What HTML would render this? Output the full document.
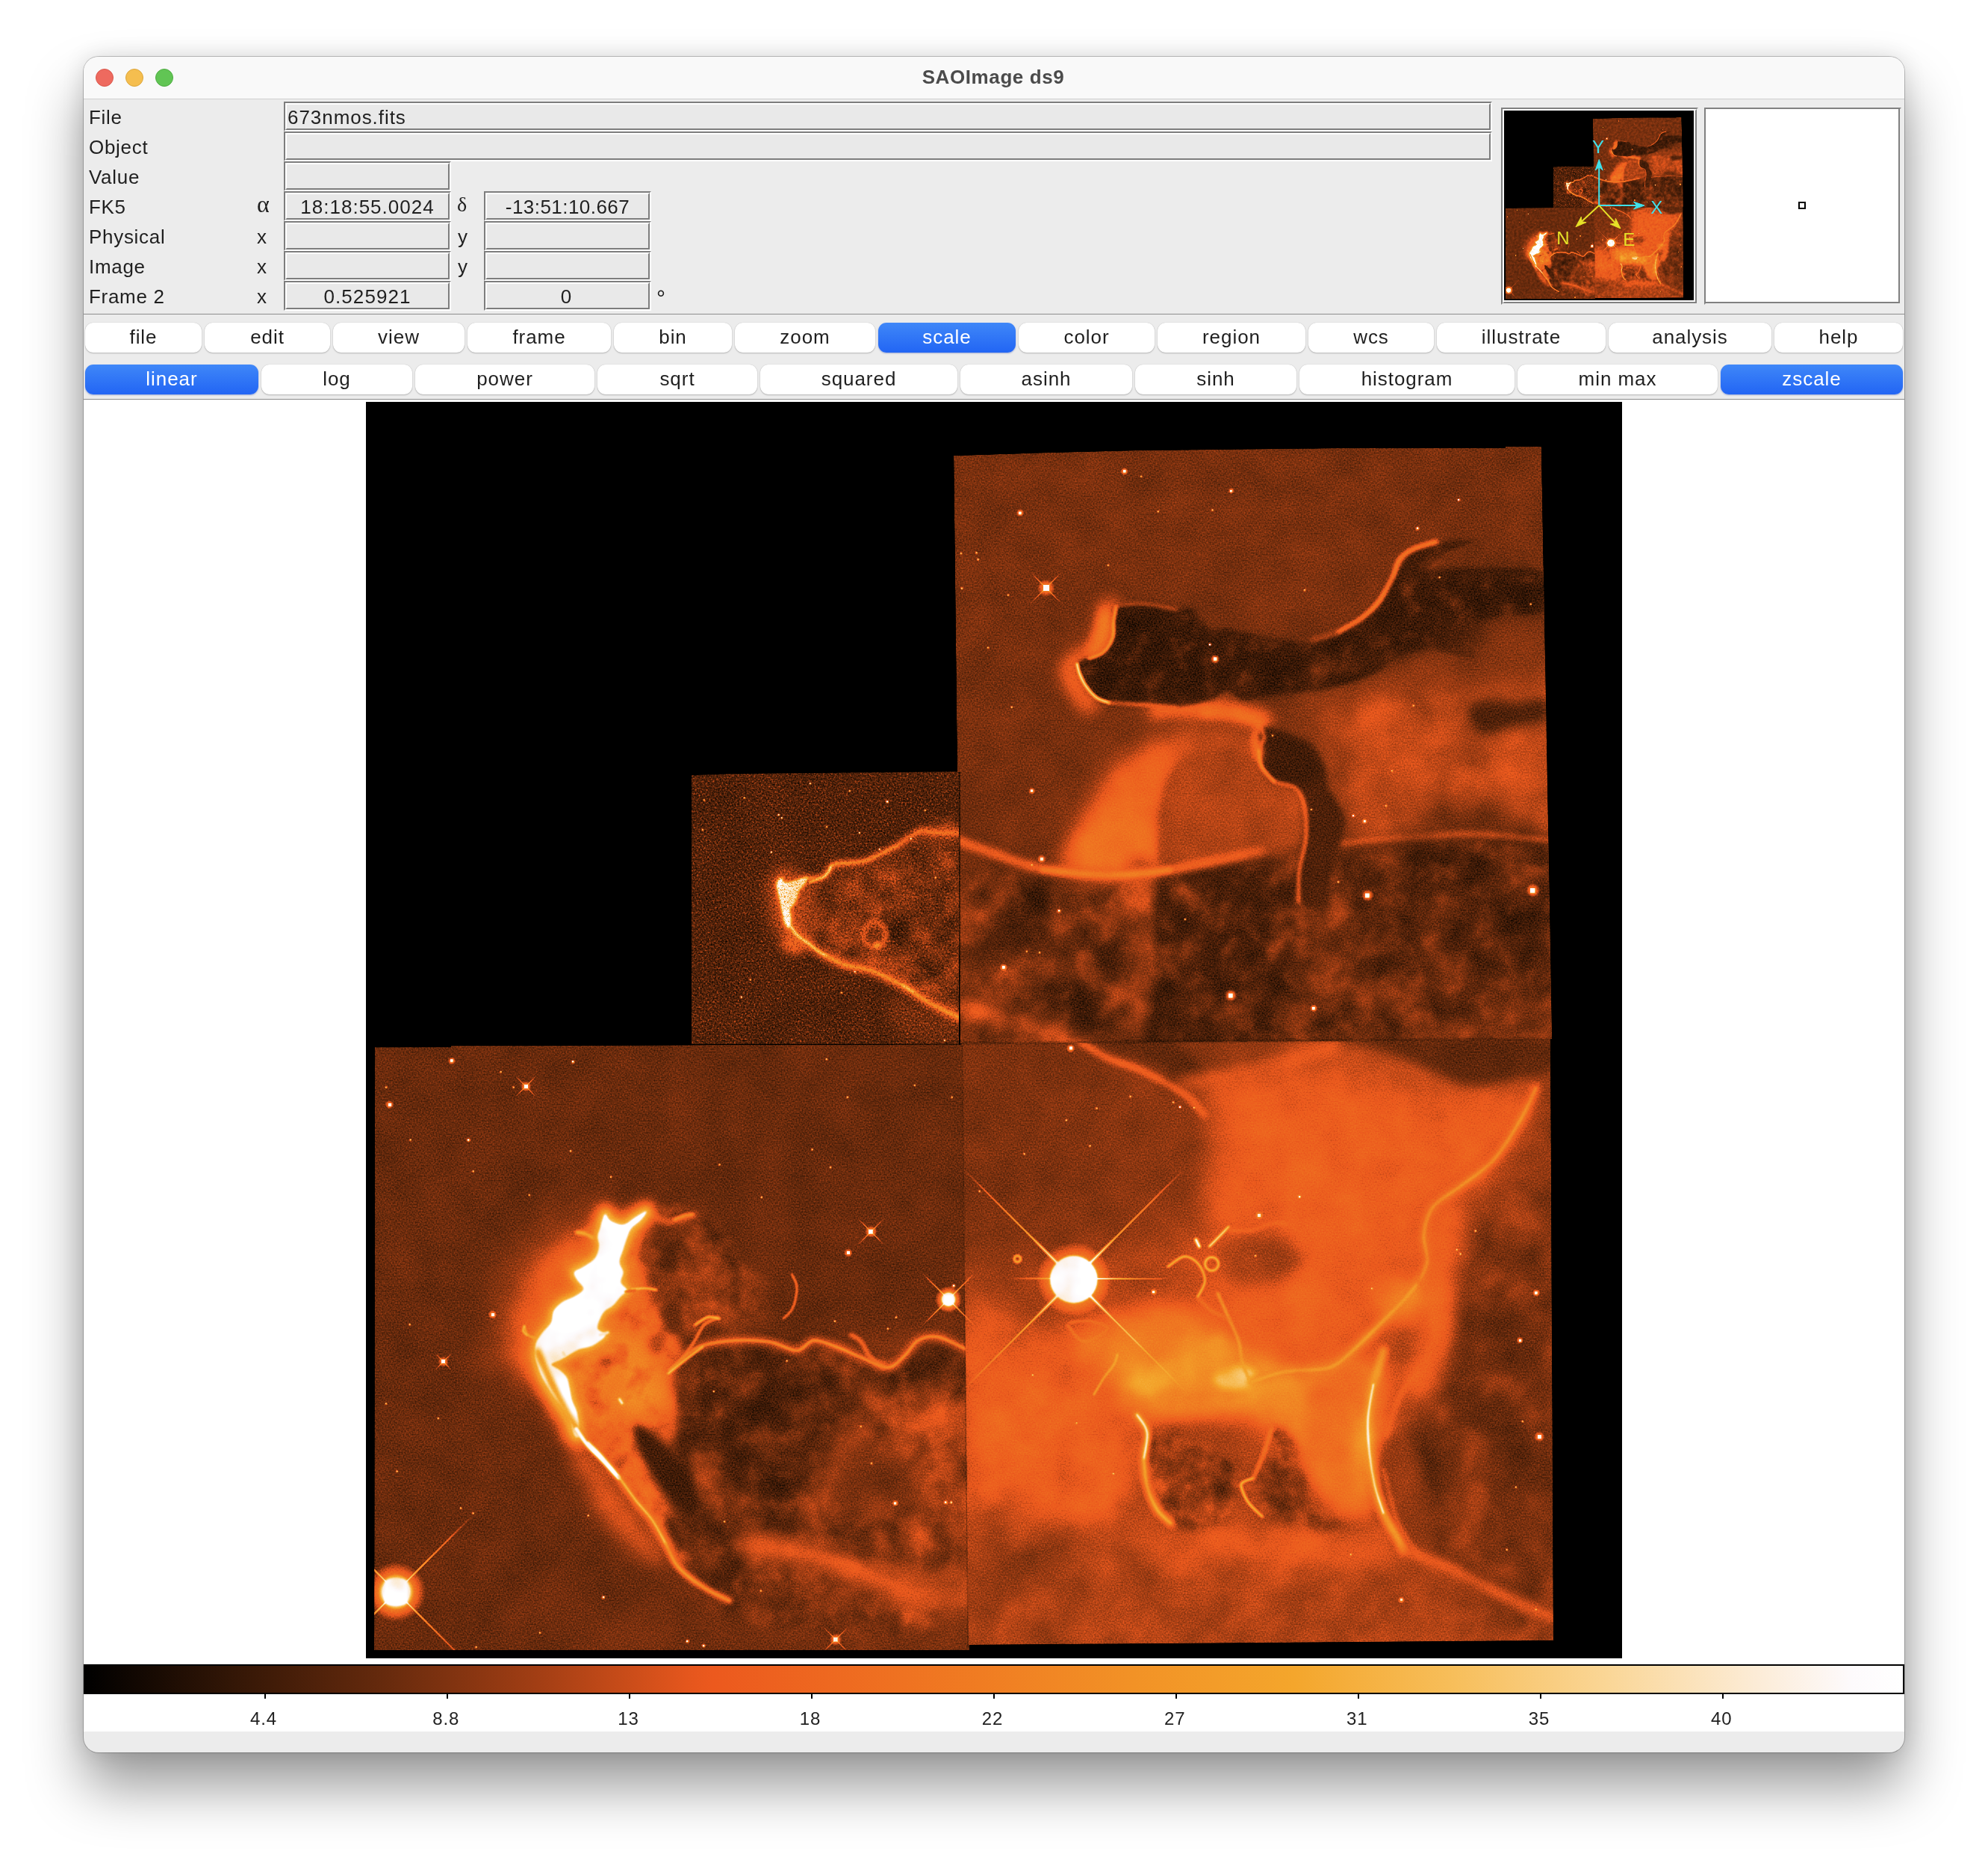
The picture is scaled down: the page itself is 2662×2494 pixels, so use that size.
<!DOCTYPE html>
<html><head><meta charset="utf-8"><title>SAOImage ds9</title>
<style>
html,body{margin:0;padding:0;background:#fff;}
body{width:2662px;height:2494px;position:relative;overflow:hidden;font-family:"Liberation Sans",sans-serif;}
#win{position:absolute;left:112px;top:76px;width:2438px;height:2270px;border-radius:20px;background:#ececec;
 box-shadow:0 0 0 1px rgba(0,0,0,.22),0 46px 76px rgba(0,0,0,.40),0 0 30px rgba(0,0,0,.12);}
#clip{position:absolute;left:0;top:0;width:2438px;height:2270px;border-radius:20px;overflow:hidden;will-change:transform;-webkit-font-smoothing:antialiased;}
#tb{position:absolute;left:0;top:0;width:2438px;height:56px;background:#f9f9f9;border-bottom:1px solid #cfcfcf;}
#tb .t{position:absolute;left:0;width:2438px;top:12px;text-align:center;font-weight:bold;font-size:26px;line-height:30px;color:#4b4b4b;letter-spacing:.6px;margin-left:-1px;}
.dot{position:absolute;top:16px;width:24px;height:24px;border-radius:50%;box-sizing:border-box;}
.lab{position:absolute;left:7px;font-size:26px;line-height:36px;color:#1f1f1f;letter-spacing:.7px;white-space:nowrap;}
.sym{position:absolute;font-size:26px;line-height:36px;color:#1f1f1f;white-space:nowrap;}
.ent{position:absolute;height:40px;background:#e9e9e9;box-sizing:border-box;border-top:2px solid #7d7d7d;border-left:2px solid #7d7d7d;border-right:2px solid #fff;border-bottom:2px solid #fff;}
.ent i{position:absolute;left:0;top:0;right:0;bottom:0;border-top:2px solid #fff;border-left:2px solid #fff;border-right:2px solid #7d7d7d;border-bottom:2px solid #7d7d7d;}
.ent span{position:absolute;left:3px;right:3px;top:1px;font-size:26px;line-height:36px;color:#1f1f1f;letter-spacing:.75px;white-space:nowrap;}
.ent span.ctr{text-align:center;}
.hr{position:absolute;left:0;width:2438px;height:1px;background:#8c8c8c;}
.btn{position:absolute;height:40px;border-radius:11px;background:#fff;box-shadow:0 1px 2px rgba(0,0,0,.22),0 0 1px rgba(0,0,0,.25);
 font-size:26px;line-height:38px;text-align:center;color:#1f1f1f;letter-spacing:.95px;}
.btn.on{background:linear-gradient(#3f87f8,#2265f4);color:#fff;box-shadow:0 1px 2px rgba(0,40,160,.35);}
#view{position:absolute;left:0;top:459px;width:2438px;height:1783px;background:#fff;}
#cbar{position:absolute;left:0;top:2152px;width:2438px;height:40px;box-sizing:border-box;border:2px solid #000;}
.tick{position:absolute;top:2192px;width:2px;height:6px;background:#000;}
.tl{position:absolute;top:2211px;width:124px;text-align:center;font-size:24px;line-height:28px;color:#222;letter-spacing:.9px;}
.frame{position:absolute;width:264px;height:264px;box-sizing:border-box;}
</style></head><body>
<div id="win"><div id="clip">
<div id="tb"><div class="dot" style="left:16px;background:#ee6a5f;border:1px solid #d9574c"></div><div class="dot" style="left:56px;background:#f5be4f;border:1px solid #dba53a"></div><div class="dot" style="left:96px;background:#61c554;border:1px solid #4eab42"></div><div class="t">SAOImage ds9</div></div>
<div class="lab" style="top:63px">File</div>
<div class="lab" style="top:103px">Object</div>
<div class="lab" style="top:143px">Value</div>
<div class="lab" style="top:183px">FK5</div>
<div class="lab" style="top:223px">Physical</div>
<div class="lab" style="top:263px">Image</div>
<div class="lab" style="top:303px">Frame 2</div>
<div class="sym" style="left:232px;top:179px;font-family:'Liberation Serif',serif;font-size:32px">&alpha;</div>
<div class="sym" style="left:500px;top:180px;font-family:'Liberation Serif',serif;font-size:28px">&delta;</div>
<div class="sym" style="left:232px;top:223px">x</div><div class="sym" style="left:501px;top:223px">y</div>
<div class="sym" style="left:232px;top:263px">x</div><div class="sym" style="left:501px;top:263px">y</div>
<div class="sym" style="left:232px;top:303px">x</div><div class="sym" style="left:767px;top:304.5px;font-size:30px">&deg;</div>
<div class="ent" style="left:268px;top:60px;width:1618px"><i></i><b></b><span class="left" style="letter-spacing:0.95px">673nmos.fits</span></div><div class="ent" style="left:268px;top:100px;width:1618px"><i></i><b></b><span class="left" style="letter-spacing:0.75px"></span></div><div class="ent" style="left:268px;top:140px;width:224px"><i></i><b></b><span class="left" style="letter-spacing:0.75px"></span></div><div class="ent" style="left:268px;top:180px;width:224px"><i></i><b></b><span class="ctr" style="letter-spacing:1.00px">18:18:55.0024</span></div><div class="ent" style="left:536px;top:180px;width:224px"><i></i><b></b><span class="ctr" style="letter-spacing:0.45px">-13:51:10.667</span></div><div class="ent" style="left:268px;top:220px;width:224px"><i></i><b></b><span class="left" style="letter-spacing:0.75px"></span></div><div class="ent" style="left:536px;top:220px;width:224px"><i></i><b></b><span class="left" style="letter-spacing:0.75px"></span></div><div class="ent" style="left:268px;top:260px;width:224px"><i></i><b></b><span class="left" style="letter-spacing:0.75px"></span></div><div class="ent" style="left:536px;top:260px;width:224px"><i></i><b></b><span class="left" style="letter-spacing:0.75px"></span></div><div class="ent" style="left:268px;top:300px;width:224px"><i></i><b></b><span class="ctr" style="letter-spacing:1.10px">0.525921</span></div><div class="ent" style="left:536px;top:300px;width:224px"><i></i><b></b><span class="ctr" style="margin-left:-4px;letter-spacing:0.00px">0</span></div>
<div class="hr" style="top:344px"></div>
<div class="btn" style="left:2px;top:356px;width:156px">file</div>
<div class="btn" style="left:162px;top:356px;width:168px">edit</div>
<div class="btn" style="left:334px;top:356px;width:176px">view</div>
<div class="btn" style="left:514px;top:356px;width:192px">frame</div>
<div class="btn" style="left:710px;top:356px;width:158px">bin</div>
<div class="btn" style="left:872px;top:356px;width:188px">zoom</div>
<div class="btn on" style="left:1064px;top:356px;width:184px">scale</div>
<div class="btn" style="left:1252px;top:356px;width:182px">color</div>
<div class="btn" style="left:1438px;top:356px;width:198px">region</div>
<div class="btn" style="left:1640px;top:356px;width:168px">wcs</div>
<div class="btn" style="left:1812px;top:356px;width:226px">illustrate</div>
<div class="btn" style="left:2042px;top:356px;width:218px">analysis</div>
<div class="btn" style="left:2264px;top:356px;width:172px">help</div>
<div class="btn on" style="left:2px;top:412px;width:232px">linear</div>
<div class="btn" style="left:238px;top:412px;width:202px">log</div>
<div class="btn" style="left:444px;top:412px;width:240px">power</div>
<div class="btn" style="left:688px;top:412px;width:214px">sqrt</div>
<div class="btn" style="left:906px;top:412px;width:264px">squared</div>
<div class="btn" style="left:1174px;top:412px;width:230px">asinh</div>
<div class="btn" style="left:1408px;top:412px;width:216px">sinh</div>
<div class="btn" style="left:1628px;top:412px;width:288px">histogram</div>
<div class="btn" style="left:1920px;top:412px;width:268px">min max</div>
<div class="btn on" style="left:2192px;top:412px;width:244px">zscale</div>
<div class="hr" style="top:458px"></div>
<div id="view"></div>
<!-- panner -->
<div class="frame" style="left:1898px;top:68px;border-top:2px solid #808080;border-left:2px solid #808080;border-right:2px solid #ececec;border-bottom:2px solid #ececec;">
 <div style="position:absolute;left:0;top:0;width:260px;height:260px;box-sizing:border-box;border-top:2px solid #fff;border-left:2px solid #fff;border-right:2px solid #808080;border-bottom:2px solid #808080;background:#fff"></div>
 <div style="position:absolute;left:2px;top:2px;width:254px;height:254px;background:#000"></div>
</div>
<!-- magnifier -->
<div class="frame" style="left:2170px;top:68px;border-top:2px solid #808080;border-left:2px solid #808080;border-right:2px solid #ececec;border-bottom:2px solid #ececec;">
 <div style="position:absolute;left:0;top:0;width:260px;height:260px;box-sizing:border-box;border-right:2px solid #808080;border-bottom:2px solid #808080;background:#fff"></div>
 <div style="position:absolute;left:124px;top:124px;width:10px;height:10px;box-sizing:border-box;border:2px solid #000"></div>
</div>
<svg id="main" style="position:absolute;left:378px;top:462px" width="1682" height="1682" viewBox="490 538 1682 1682">
<defs>
<filter id="cm" x="490" y="538" width="1682" height="1682" filterUnits="userSpaceOnUse" color-interpolation-filters="sRGB">
 <feTurbulence type="fractalNoise" baseFrequency="0.5" numOctaves="2" seed="7" result="n"/>
 <feColorMatrix in="n" type="matrix" values="1 0 0 0 0  1 0 0 0 0  1 0 0 0 0  0 0 0 0 1" result="ng"/>
 <feTurbulence type="fractalNoise" baseFrequency="0.018" numOctaves="3" seed="11" result="m"/>
 <feColorMatrix in="m" type="matrix" values="0 1 0 0 0  0 1 0 0 0  0 1 0 0 0  0 0 0 0 1" result="mg"/>
 <feComposite in="SourceGraphic" in2="mg" operator="arithmetic" k1="0.30" k2="0.85" k3="0" k4="0" result="s0"/>
 <feComposite in="s0" in2="ng" operator="arithmetic" k1="-0.26" k2="1.13" k3="0.26" k4="-0.13" result="s"/>
 <feComponentTransfer in="s" result="c">
  <feFuncR type="table" tableValues="0.0000 0.0408 0.0817 0.1225 0.1634 0.2042 0.2446 0.2851 0.3256 0.3660 0.4074 0.4535 0.4997 0.5458 0.5919 0.6385 0.6911 0.7437 0.7963 0.8489 0.8993 0.9261 0.9282 0.9303 0.9323 0.9341 0.9357 0.9373 0.9388 0.9404 0.9419 0.9435 0.9450 0.9465 0.9481 0.9496 0.9511 0.9526 0.9540 0.9555 0.9571 0.9593 0.9616 0.9638 0.9661 0.9684 0.9707 0.9730 0.9753 0.9776 0.9799 0.9816 0.9832 0.9848 0.9863 0.9879 0.9892 0.9905 0.9918 0.9953 1.0000"/>
  <feFuncG type="table" tableValues="0.0000 0.0180 0.0359 0.0539 0.0719 0.0894 0.1049 0.1205 0.1361 0.1516 0.1672 0.1825 0.1979 0.2133 0.2287 0.2443 0.2634 0.2825 0.3017 0.3208 0.3392 0.3537 0.3692 0.3848 0.4004 0.4159 0.4315 0.4471 0.4626 0.4782 0.4944 0.5113 0.5282 0.5451 0.5621 0.5782 0.5930 0.6079 0.6228 0.6376 0.6528 0.6708 0.6888 0.7069 0.7249 0.7429 0.7613 0.7798 0.7982 0.8167 0.8352 0.8527 0.8701 0.8874 0.9047 0.9220 0.9396 0.9572 0.9748 0.9883 1.0000"/>
  <feFuncB type="table" tableValues="0.0000 0.0049 0.0098 0.0147 0.0196 0.0246 0.0301 0.0355 0.0410 0.0464 0.0518 0.0572 0.0626 0.0680 0.0734 0.0789 0.0860 0.0932 0.1004 0.1076 0.1144 0.1183 0.1203 0.1224 0.1245 0.1263 0.1279 0.1294 0.1310 0.1325 0.1348 0.1379 0.1410 0.1440 0.1471 0.1507 0.1552 0.1596 0.1641 0.1685 0.1760 0.2106 0.2451 0.2797 0.3142 0.3488 0.3935 0.4397 0.4858 0.5319 0.5781 0.6282 0.6793 0.7305 0.7817 0.8329 0.8803 0.9268 0.9734 0.9930 1.0000"/>
 </feComponentTransfer>
 <feComposite in="c" in2="SourceAlpha" operator="in"/>
</filter>
<filter id="b0_7" x="430" y="478" width="1802" height="1802" filterUnits="userSpaceOnUse" color-interpolation-filters="sRGB"><feGaussianBlur stdDeviation="0.7"/></filter>
<filter id="b0_8" x="430" y="478" width="1802" height="1802" filterUnits="userSpaceOnUse" color-interpolation-filters="sRGB"><feGaussianBlur stdDeviation="0.8"/></filter>
<filter id="b1_0" x="430" y="478" width="1802" height="1802" filterUnits="userSpaceOnUse" color-interpolation-filters="sRGB"><feGaussianBlur stdDeviation="1.0"/></filter>
<filter id="b1_2" x="430" y="478" width="1802" height="1802" filterUnits="userSpaceOnUse" color-interpolation-filters="sRGB"><feGaussianBlur stdDeviation="1.2"/></filter>
<filter id="b1_3" x="430" y="478" width="1802" height="1802" filterUnits="userSpaceOnUse" color-interpolation-filters="sRGB"><feGaussianBlur stdDeviation="1.3"/></filter>
<filter id="b1_5" x="430" y="478" width="1802" height="1802" filterUnits="userSpaceOnUse" color-interpolation-filters="sRGB"><feGaussianBlur stdDeviation="1.5"/></filter>
<filter id="b1_6" x="430" y="478" width="1802" height="1802" filterUnits="userSpaceOnUse" color-interpolation-filters="sRGB"><feGaussianBlur stdDeviation="1.6"/></filter>
<filter id="b1_8" x="430" y="478" width="1802" height="1802" filterUnits="userSpaceOnUse" color-interpolation-filters="sRGB"><feGaussianBlur stdDeviation="1.8"/></filter>
<filter id="b2" x="430" y="478" width="1802" height="1802" filterUnits="userSpaceOnUse" color-interpolation-filters="sRGB"><feGaussianBlur stdDeviation="2"/></filter>
<filter id="b2_5" x="430" y="478" width="1802" height="1802" filterUnits="userSpaceOnUse" color-interpolation-filters="sRGB"><feGaussianBlur stdDeviation="2.5"/></filter>
<filter id="b3" x="430" y="478" width="1802" height="1802" filterUnits="userSpaceOnUse" color-interpolation-filters="sRGB"><feGaussianBlur stdDeviation="3"/></filter>
<filter id="b3_5" x="430" y="478" width="1802" height="1802" filterUnits="userSpaceOnUse" color-interpolation-filters="sRGB"><feGaussianBlur stdDeviation="3.5"/></filter>
<filter id="b4" x="430" y="478" width="1802" height="1802" filterUnits="userSpaceOnUse" color-interpolation-filters="sRGB"><feGaussianBlur stdDeviation="4"/></filter>
<filter id="b5" x="430" y="478" width="1802" height="1802" filterUnits="userSpaceOnUse" color-interpolation-filters="sRGB"><feGaussianBlur stdDeviation="5"/></filter>
<filter id="b6" x="430" y="478" width="1802" height="1802" filterUnits="userSpaceOnUse" color-interpolation-filters="sRGB"><feGaussianBlur stdDeviation="6"/></filter>
<filter id="b7" x="430" y="478" width="1802" height="1802" filterUnits="userSpaceOnUse" color-interpolation-filters="sRGB"><feGaussianBlur stdDeviation="7"/></filter>
<filter id="b8" x="430" y="478" width="1802" height="1802" filterUnits="userSpaceOnUse" color-interpolation-filters="sRGB"><feGaussianBlur stdDeviation="8"/></filter>
<filter id="b9" x="430" y="478" width="1802" height="1802" filterUnits="userSpaceOnUse" color-interpolation-filters="sRGB"><feGaussianBlur stdDeviation="9"/></filter>
<filter id="b10" x="430" y="478" width="1802" height="1802" filterUnits="userSpaceOnUse" color-interpolation-filters="sRGB"><feGaussianBlur stdDeviation="10"/></filter>
<filter id="b12" x="430" y="478" width="1802" height="1802" filterUnits="userSpaceOnUse" color-interpolation-filters="sRGB"><feGaussianBlur stdDeviation="12"/></filter>
<filter id="b13" x="430" y="478" width="1802" height="1802" filterUnits="userSpaceOnUse" color-interpolation-filters="sRGB"><feGaussianBlur stdDeviation="13"/></filter>
<filter id="b14" x="430" y="478" width="1802" height="1802" filterUnits="userSpaceOnUse" color-interpolation-filters="sRGB"><feGaussianBlur stdDeviation="14"/></filter>
<filter id="b16" x="430" y="478" width="1802" height="1802" filterUnits="userSpaceOnUse" color-interpolation-filters="sRGB"><feGaussianBlur stdDeviation="16"/></filter>
<filter id="b18" x="430" y="478" width="1802" height="1802" filterUnits="userSpaceOnUse" color-interpolation-filters="sRGB"><feGaussianBlur stdDeviation="18"/></filter>
<filter id="b20" x="430" y="478" width="1802" height="1802" filterUnits="userSpaceOnUse" color-interpolation-filters="sRGB"><feGaussianBlur stdDeviation="20"/></filter>
<filter id="b22" x="430" y="478" width="1802" height="1802" filterUnits="userSpaceOnUse" color-interpolation-filters="sRGB"><feGaussianBlur stdDeviation="22"/></filter>
<filter id="b24" x="430" y="478" width="1802" height="1802" filterUnits="userSpaceOnUse" color-interpolation-filters="sRGB"><feGaussianBlur stdDeviation="24"/></filter>
<filter id="b25" x="430" y="478" width="1802" height="1802" filterUnits="userSpaceOnUse" color-interpolation-filters="sRGB"><feGaussianBlur stdDeviation="25"/></filter>
<filter id="b26" x="430" y="478" width="1802" height="1802" filterUnits="userSpaceOnUse" color-interpolation-filters="sRGB"><feGaussianBlur stdDeviation="26"/></filter>
<filter id="b30" x="430" y="478" width="1802" height="1802" filterUnits="userSpaceOnUse" color-interpolation-filters="sRGB"><feGaussianBlur stdDeviation="30"/></filter>
<filter id="b40" x="430" y="478" width="1802" height="1802" filterUnits="userSpaceOnUse" color-interpolation-filters="sRGB"><feGaussianBlur stdDeviation="40"/></filter><filter id="mot" x="430" y="478" width="1802" height="1802" filterUnits="userSpaceOnUse" color-interpolation-filters="sRGB">
<feGaussianBlur in="SourceAlpha" stdDeviation="10" result="sa"/>
<feTurbulence type="fractalNoise" baseFrequency="0.016" numOctaves="3" seed="4" result="t"/>
<feColorMatrix in="t" type="matrix" values="0 0 0 0 0  0 0 0 0 0  0 0 0 0 0  2.4 0 0 0 -1.15" result="dk"/>
<feComposite in="dk" in2="sa" operator="in" result="d"/>
<feColorMatrix in="t" type="matrix" values="0 0 0 0 0.5  0 0 0 0 0.5  0 0 0 0 0.5  -2.4 0 0 0 1.1" result="lt"/>
<feComposite in="lt" in2="sa" operator="in" result="l"/>
<feMerge><feMergeNode in="d"/><feMergeNode in="l"/></feMerge></filter>
<filter id="mot2" x="430" y="478" width="1802" height="1802" filterUnits="userSpaceOnUse" color-interpolation-filters="sRGB">
<feGaussianBlur in="SourceAlpha" stdDeviation="6" result="sa"/>
<feTurbulence type="fractalNoise" baseFrequency="0.032" numOctaves="3" seed="9" result="t"/>
<feColorMatrix in="t" type="matrix" values="0 0 0 0 0  0 0 0 0 0  0 0 0 0 0  2.4 0 0 0 -1.15" result="dk"/>
<feComposite in="dk" in2="sa" operator="in" result="d"/>
<feColorMatrix in="t" type="matrix" values="0 0 0 0 0.5  0 0 0 0 0.5  0 0 0 0 0.5  -2.4 0 0 0 1.1" result="lt"/>
<feComposite in="lt" in2="sa" operator="in" result="l"/>
<feMerge><feMergeNode in="d"/><feMergeNode in="l"/></feMerge></filter>
<filter id="mot3" x="430" y="478" width="1802" height="1802" filterUnits="userSpaceOnUse" color-interpolation-filters="sRGB">
<feGaussianBlur in="SourceAlpha" stdDeviation="16" result="sa"/>
<feTurbulence type="fractalNoise" baseFrequency="0.009" numOctaves="3" seed="2" result="t"/>
<feColorMatrix in="t" type="matrix" values="0 0 0 0 0  0 0 0 0 0  0 0 0 0 0  2.4 0 0 0 -1.15" result="dk"/>
<feComposite in="dk" in2="sa" operator="in" result="d"/>
<feColorMatrix in="t" type="matrix" values="0 0 0 0 0.5  0 0 0 0 0.5  0 0 0 0 0.5  -2.4 0 0 0 1.1" result="lt"/>
<feComposite in="lt" in2="sa" operator="in" result="l"/>
<feMerge><feMergeNode in="d"/><feMergeNode in="l"/></feMerge></filter>
<filter id="spk" x="430" y="478" width="1802" height="1802" filterUnits="userSpaceOnUse" color-interpolation-filters="sRGB">
<feGaussianBlur in="SourceAlpha" stdDeviation="1" result="sa"/>
<feTurbulence type="fractalNoise" baseFrequency="0.42" numOctaves="3" seed="21" result="t"/>
<feColorMatrix in="t" type="matrix" values="0 0 0 0 0  0 0 0 0 0  0 0 0 0 0  2.4 0 0 0 -1.15" result="dk"/>
<feComposite in="dk" in2="sa" operator="in" result="d"/>
<feColorMatrix in="t" type="matrix" values="0 0 0 0 0.5  0 0 0 0 0.5  0 0 0 0 0.5  -2.4 0 0 0 1.1" result="lt"/>
<feComposite in="lt" in2="sa" operator="in" result="l"/>
<feMerge><feMergeNode in="d"/><feMergeNode in="l"/></feMerge></filter>

<radialGradient id="bh"><stop offset="0" stop-color="#fff" stop-opacity="1"/><stop offset="0.45" stop-color="#fff" stop-opacity="0.9"/><stop offset="0.6" stop-color="#fff" stop-opacity="0.35"/><stop offset="1" stop-color="#fff" stop-opacity="0"/></radialGradient>
<linearGradient id="sp" gradientUnits="objectBoundingBox"><stop offset="0" stop-color="#fff" stop-opacity="0"/><stop offset="0.3" stop-color="#fff" stop-opacity="0.55"/><stop offset="0.5" stop-color="#fff" stop-opacity="1"/><stop offset="0.7" stop-color="#fff" stop-opacity="0.55"/><stop offset="1" stop-color="#fff" stop-opacity="0"/></linearGradient>
<radialGradient id="sh"><stop offset="0" stop-color="#fff" stop-opacity="0.95"/><stop offset="0.35" stop-color="#fff" stop-opacity="0.45"/><stop offset="1" stop-color="#fff" stop-opacity="0"/></radialGradient>
<clipPath id="chips"><polygon points="1277.0,610.0 1400.0,606.0 1520.0,603.0 1790.0,600.0 2016.0,600.0 2016.0,598.0 2064.0,598.0 2078.0,1391.0 1286.0,1397.0"/><polygon points="926.0,1038.0 980.0,1036.0 1284.0,1033.0 1284.0,1398.0 926.0,1398.0"/><polygon points="502.0,1402.0 604.0,1402.0 604.0,1400.0 1290.0,1398.0 1298.0,2209.0 501.0,2209.0"/><polygon points="1288.0,1397.0 2076.0,1391.0 2080.0,2196.0 1297.0,2202.0"/></clipPath>
<clipPath id="cTR"><polygon points="1277.0,610.0 1400.0,606.0 1520.0,603.0 1790.0,600.0 2016.0,600.0 2016.0,598.0 2064.0,598.0 2078.0,1391.0 1286.0,1397.0"/></clipPath><clipPath id="cPC"><polygon points="926.0,1038.0 980.0,1036.0 1284.0,1033.0 1284.0,1398.0 926.0,1398.0"/></clipPath><clipPath id="cBL"><polygon points="502.0,1402.0 604.0,1402.0 604.0,1400.0 1290.0,1398.0 1298.0,2209.0 501.0,2209.0"/></clipPath><clipPath id="cBR"><polygon points="1288.0,1397.0 2076.0,1391.0 2080.0,2196.0 1297.0,2202.0"/></clipPath>

</defs>
<rect x="490" y="538" width="1682" height="1682" fill="#000"/>
<g filter="url(#cm)"><g id="nebc">
<g clip-path="url(#chips)">
<g>
<path d="M1277.0 610.0 L1400.0 606.0 L1520.0 603.0 L1790.0 600.0 L2016.0 600.0 L2016.0 598.0 L2064.0 598.0 L2078.0 1391.0 L1286.0 1397.0Z" fill="rgb(48,48,48)"/>
<path d="M926.0 1038.0 L980.0 1036.0 L1284.0 1033.0 L1284.0 1398.0 L926.0 1398.0Z" fill="rgb(51,51,51)"/>
<path d="M502.0 1402.0 L604.0 1402.0 L604.0 1400.0 L1290.0 1398.0 L1298.0 2209.0 L501.0 2209.0Z" fill="rgb(43,43,43)"/>
<path d="M1288.0 1397.0 L2076.0 1391.0 L2080.0 2196.0 L1297.0 2202.0Z" fill="rgb(69,69,69)"/>
</g></g>
<g clip-path="url(#cBL)">
<g filter="url(#b30)">
<path d="M1076.2 1840.9C1125.0 1822.1 1264.0 1762.0 1301.6 1818.3C1339.2 1874.7 1354.2 2118.9 1301.6 2179.0C1249.0 2239.2 1046.1 2197.8 986.0 2179.0C925.9 2160.3 937.1 2107.7 940.9 2066.3C944.6 2025.0 986.0 1968.6 1008.5 1931.1C1031.1 1893.5 1027.3 1859.7 1076.2 1840.9Z" fill="rgb(56,56,56)"/>
<ellipse cx="1247.5" cy="1931.1" rx="85.7" ry="117.2" fill="rgb(74,74,74)"/>
<ellipse cx="895.8" cy="2179.0" rx="225.4" ry="36.1" fill="rgb(48,48,48)"/>
</g></g>
<g clip-path="url(#cBL)">
<g filter="url(#b26)">
<ellipse cx="756.0" cy="1741.7" rx="85.7" ry="135.3" fill="rgb(66,66,66)" transform="rotate(28.0 756.0 1741.7)"/>
</g></g>
<g clip-path="url(#cBL)">
<g filter="url(#b14)">
<ellipse cx="756.0" cy="1746.2" rx="54.1" ry="108.2" fill="rgb(97,97,97)" transform="rotate(28.0 756.0 1746.2)"/>
</g></g>
<g clip-path="url(#cBL)">
<g filter="url(#b12)">
<path d="M742.5 1840.9C750.0 1848.4 763.5 1896.5 778.6 1922.0C793.6 1947.6 813.1 1965.6 832.7 1994.2C852.2 2022.7 891.3 2078.4 895.8 2093.4C900.3 2108.4 874.8 2094.9 859.7 2084.4C844.7 2073.8 820.6 2051.3 805.6 2030.3C790.6 2009.2 781.6 1983.7 769.5 1958.1C757.5 1932.6 738.0 1896.5 733.5 1877.0C729.0 1857.4 735.0 1833.4 742.5 1840.9Z" fill="rgb(84,84,84)"/>
</g></g>
<g clip-path="url(#cBL)">
<g filter="url(#b14)">
<path d="M841.7 1624.5C849.2 1611.7 880.0 1629.0 895.8 1629.0C911.6 1629.0 927.4 1617.7 936.4 1624.5C945.4 1631.2 941.6 1656.0 949.9 1669.5C958.2 1683.1 974.0 1692.1 986.0 1705.6C998.0 1719.1 1022.0 1738.7 1022.0 1750.7C1022.0 1762.7 1002.5 1773.3 986.0 1777.8C969.4 1782.3 940.9 1782.3 922.9 1777.8C904.8 1773.3 889.8 1762.7 877.8 1750.7C865.7 1738.7 856.7 1726.7 850.7 1705.6C844.7 1684.6 834.2 1637.2 841.7 1624.5Z" fill="rgb(64,64,64)"/>
</g></g>
<g clip-path="url(#cBL)">
<g filter="url(#b10)">
<ellipse cx="895.8" cy="1678.6" rx="27.1" ry="40.6" fill="rgb(43,43,43)"/>
<ellipse cx="999.5" cy="1723.7" rx="27.1" ry="18.0" fill="rgb(59,59,59)"/>
</g></g>
<g clip-path="url(#cBL)">
<g filter="url(#b7)">
<path d="M805.6 1642.5C816.9 1635.7 841.7 1632.0 850.7 1642.5C859.7 1653.0 855.2 1687.6 859.7 1705.6C864.2 1723.7 869.5 1735.7 877.8 1750.7C886.0 1765.7 901.8 1780.8 909.3 1795.8C916.8 1810.8 922.1 1825.9 922.9 1840.9C923.6 1855.9 918.3 1870.9 913.8 1886.0C909.3 1901.0 903.3 1926.6 895.8 1931.1C888.3 1935.6 876.3 1916.8 868.7 1913.0C861.2 1909.3 852.2 1901.8 850.7 1908.5C849.2 1915.3 852.2 1934.8 859.7 1953.6C867.2 1972.4 885.3 1997.9 895.8 2021.2C906.3 2044.5 922.9 2084.4 922.9 2093.4C922.9 2102.4 907.8 2088.9 895.8 2075.3C883.8 2061.8 865.7 2032.5 850.7 2012.2C835.7 1991.9 819.1 1970.9 805.6 1953.6C792.1 1936.3 780.1 1923.5 769.5 1908.5C759.0 1893.5 750.0 1878.5 742.5 1863.4C735.0 1848.4 721.5 1837.1 724.5 1818.3C727.5 1799.6 750.8 1773.3 760.5 1750.7C770.3 1728.2 775.6 1701.1 783.1 1683.1C790.6 1665.0 794.3 1649.3 805.6 1642.5Z" fill="rgb(107,107,107)"/>
</g></g>
<g clip-path="url(#cBL)">
<g filter="url(#b10)">
<path d="M760.5 1786.8C770.3 1776.3 790.6 1776.3 805.6 1777.8C820.6 1779.3 837.2 1785.3 850.7 1795.8C864.2 1806.3 882.3 1825.9 886.8 1840.9C891.3 1855.9 886.8 1877.0 877.8 1886.0C868.7 1895.0 846.2 1889.0 832.7 1895.0C819.1 1901.0 807.1 1923.5 796.6 1922.0C786.1 1920.5 777.8 1899.5 769.5 1886.0C761.3 1872.4 748.5 1857.4 747.0 1840.9C745.5 1824.4 750.8 1797.3 760.5 1786.8Z" fill="rgb(128,128,128)"/>
</g></g>
<g clip-path="url(#cBL)">
<g filter="url(#mot2)">
<path d="M805.6 1642.5C816.9 1635.7 841.7 1632.0 850.7 1642.5C859.7 1653.0 855.2 1687.6 859.7 1705.6C864.2 1723.7 869.5 1735.7 877.8 1750.7C886.0 1765.7 901.8 1780.8 909.3 1795.8C916.8 1810.8 922.1 1825.9 922.9 1840.9C923.6 1855.9 918.3 1870.9 913.8 1886.0C909.3 1901.0 903.3 1926.6 895.8 1931.1C888.3 1935.6 876.3 1916.8 868.7 1913.0C861.2 1909.3 852.2 1901.8 850.7 1908.5C849.2 1915.3 852.2 1934.8 859.7 1953.6C867.2 1972.4 885.3 1997.9 895.8 2021.2C906.3 2044.5 922.9 2084.4 922.9 2093.4C922.9 2102.4 907.8 2088.9 895.8 2075.3C883.8 2061.8 865.7 2032.5 850.7 2012.2C835.7 1991.9 819.1 1970.9 805.6 1953.6C792.1 1936.3 780.1 1923.5 769.5 1908.5C759.0 1893.5 750.0 1878.5 742.5 1863.4C735.0 1848.4 721.5 1837.1 724.5 1818.3C727.5 1799.6 750.8 1773.3 760.5 1750.7C770.3 1728.2 775.6 1701.1 783.1 1683.1C790.6 1665.0 794.3 1649.3 805.6 1642.5Z" fill="#000" fill-opacity="0.40"/>
</g></g>
<g clip-path="url(#cBL)">
<g filter="url(#b7)">
<path d="M909.3 1822.9C915.9 1815.7 928.1 1811.2 940.9 1807.1C953.7 1802.9 970.9 1799.2 986.0 1798.1C1001.0 1796.9 1017.5 1798.1 1031.1 1800.3C1044.6 1802.6 1055.9 1812.0 1067.1 1811.6C1078.4 1811.2 1089.7 1798.8 1098.7 1798.1C1107.7 1797.3 1111.5 1803.3 1121.2 1807.1C1131.0 1810.8 1145.3 1816.1 1157.3 1820.6C1169.3 1825.1 1184.4 1834.1 1193.4 1834.1C1202.4 1834.1 1204.7 1826.6 1211.4 1820.6C1218.2 1814.6 1226.4 1802.6 1234.0 1798.1C1241.5 1793.5 1246.0 1791.3 1256.5 1793.5C1267.0 1795.8 1290.3 1803.7 1297.1 1811.6C1303.8 1819.5 1311.4 1833.0 1297.1 1840.9C1282.8 1848.8 1237.0 1851.4 1211.4 1858.9C1185.9 1866.4 1162.6 1874.0 1143.8 1886.0C1125.0 1898.0 1110.0 1912.3 1098.7 1931.1C1087.4 1949.8 1082.9 1977.7 1076.2 1998.7C1069.4 2019.7 1065.6 2041.5 1058.1 2057.3C1050.6 2073.1 1041.6 2091.9 1031.1 2093.4C1020.5 2094.9 1007.0 2082.1 995.0 2066.3C983.0 2050.5 969.4 2019.7 958.9 1998.7C948.4 1977.7 940.1 1958.9 931.9 1940.1C923.6 1921.3 914.4 1901.0 909.3 1886.0C904.2 1870.9 901.2 1860.4 901.2 1849.9C901.2 1839.4 902.7 1830.0 909.3 1822.9Z" fill="rgb(45,45,45)"/>
</g></g>
<g clip-path="url(#cBL)">
<g filter="url(#b12)">
<path d="M922.9 1822.9C930.4 1806.3 960.4 1809.3 986.0 1809.3C1011.5 1809.3 1049.8 1817.6 1076.2 1822.9C1102.5 1828.1 1143.8 1830.4 1143.8 1840.9C1143.8 1851.4 1094.9 1867.2 1076.2 1886.0C1057.4 1904.8 1046.1 1938.6 1031.1 1953.6C1016.0 1968.6 1001.0 1983.7 986.0 1976.2C970.9 1968.6 951.4 1934.1 940.9 1908.5C930.4 1883.0 915.3 1839.4 922.9 1822.9Z" fill="rgb(36,36,36)"/>
<ellipse cx="1044.6" cy="1998.7" rx="27.1" ry="67.6" fill="rgb(38,38,38)"/>
</g></g>
<g clip-path="url(#cBL)">
<g filter="url(#b8)">
<ellipse cx="1234.0" cy="1827.4" rx="49.6" ry="13.5" fill="rgb(36,36,36)"/>
</g></g>
<g clip-path="url(#cBL)">
<g filter="url(#b16)">
<path d="M1143.8 1890.5C1161.8 1875.5 1194.1 1870.9 1220.4 1863.4C1246.7 1855.9 1288.1 1813.1 1301.6 1845.4C1315.1 1877.7 1316.6 2020.5 1301.6 2057.3C1286.6 2094.1 1237.7 2070.8 1211.4 2066.3C1185.1 2061.8 1160.3 2049.0 1143.8 2030.3C1127.3 2011.5 1112.2 1976.9 1112.2 1953.6C1112.2 1930.3 1125.7 1905.5 1143.8 1890.5Z" fill="rgb(64,64,64)"/>
</g></g>
<g clip-path="url(#cBL)">
<g filter="url(#b18)">
<ellipse cx="1256.5" cy="1931.1" rx="40.6" ry="72.1" fill="rgb(76,76,76)"/>
</g></g>
<g clip-path="url(#cBL)">
<g filter="url(#b14)">
<path d="M922.9 1976.2C933.4 1973.9 964.2 2015.2 986.0 2030.3C1007.8 2045.3 1031.1 2061.8 1053.6 2066.3C1076.2 2070.8 1102.5 2055.8 1121.2 2057.3C1140.0 2058.8 1166.3 2064.8 1166.3 2075.3C1166.3 2085.9 1143.8 2108.4 1121.2 2120.4C1098.7 2132.5 1053.6 2141.5 1031.1 2147.5C1008.5 2153.5 1001.0 2162.5 986.0 2156.5C970.9 2150.5 951.4 2130.2 940.9 2111.4C930.4 2092.6 925.9 2066.3 922.9 2043.8C919.8 2021.2 912.3 1978.4 922.9 1976.2Z" fill="rgb(52,52,52)"/>
</g></g>
<g clip-path="url(#cBL)">
<g filter="url(#b8)">
<ellipse cx="977.0" cy="2093.4" rx="22.5" ry="49.6" fill="rgb(40,40,40)" transform="rotate(-15.0 977.0 2093.4)"/>
</g></g>
<g clip-path="url(#cBL)">
<g filter="url(#b6)">
<ellipse cx="945.4" cy="1989.7" rx="11.7" ry="54.1" fill="rgb(69,69,69)" transform="rotate(-22.0 945.4 1989.7)"/>
</g></g>
<g clip-path="url(#cBL)">
<g filter="url(#b7)">
<ellipse cx="999.5" cy="2034.8" rx="10.8" ry="45.1" fill="rgb(59,59,59)" transform="rotate(-20.0 999.5 2034.8)"/>
</g></g>
<g clip-path="url(#cBL)">
<g filter="url(#mot)">
<path d="M909.3 1822.9C922.1 1793.2 954.4 1802.2 986.0 1798.1C1017.5 1793.9 1061.1 1794.3 1098.7 1798.1C1136.3 1801.8 1178.4 1818.3 1211.4 1820.6C1244.5 1822.9 1282.8 1755.6 1297.1 1811.6C1311.4 1867.6 1348.9 2097.5 1297.1 2156.5C1245.2 2215.5 1048.3 2176.0 986.0 2165.5C923.6 2155.0 935.6 2124.9 922.9 2093.4C910.1 2061.8 911.6 2021.2 909.3 1976.2C907.1 1931.1 896.5 1852.5 909.3 1822.9Z" fill="#000" fill-opacity="0.36"/>
</g></g>
<g clip-path="url(#cBL)">
<g filter="url(#mot2)">
<path d="M909.3 1822.9C922.1 1793.2 954.4 1802.2 986.0 1798.1C1017.5 1793.9 1061.1 1794.3 1098.7 1798.1C1136.3 1801.8 1178.4 1818.3 1211.4 1820.6C1244.5 1822.9 1282.8 1755.6 1297.1 1811.6C1311.4 1867.6 1348.9 2097.5 1297.1 2156.5C1245.2 2215.5 1048.3 2176.0 986.0 2165.5C923.6 2155.0 935.6 2124.9 922.9 2093.4C910.1 2061.8 911.6 2021.2 909.3 1976.2C907.1 1931.1 896.5 1852.5 909.3 1822.9Z" fill="#000" fill-opacity="0.28"/>
<path d="M841.7 1624.5C856.7 1610.9 910.8 1603.4 940.9 1624.5C970.9 1645.5 1025.1 1723.7 1022.0 1750.7C1019.0 1777.8 951.4 1794.3 922.9 1786.8C894.3 1779.3 864.2 1732.7 850.7 1705.6C837.2 1678.6 826.7 1638.0 841.7 1624.5Z" fill="#000" fill-opacity="0.40"/>
</g></g>
<g clip-path="url(#cBL)">
<g filter="url(#b4)">
<path d="M850.7 1908.5C853.9 1906.6 865.4 1915.7 873.3 1922.0C881.1 1928.4 889.8 1937.8 898.1 1946.8C906.3 1955.9 916.5 1965.3 922.9 1976.2C929.2 1987.0 936.2 2002.8 936.4 2012.2C936.5 2021.6 930.5 2034.6 923.8 2032.5C917.0 2030.4 904.2 2010.3 895.8 1999.6C887.4 1988.9 880.2 1979.1 873.3 1968.0C866.3 1957.0 858.1 1943.2 854.3 1933.3C850.6 1923.4 847.6 1910.4 850.7 1908.5Z" fill="rgb(28,28,28)"/>
</g></g>
<g clip-path="url(#cBL)">
<g filter="url(#b5)">
<ellipse cx="904.8" cy="2052.8" rx="9.9" ry="27.1" fill="rgb(36,36,36)" transform="rotate(-25.0 904.8 2052.8)"/>
<ellipse cx="940.9" cy="2111.4" rx="9.0" ry="22.5" fill="rgb(38,38,38)" transform="rotate(-20.0 940.9 2111.4)"/>
</g></g>
<g clip-path="url(#cBL)">
<g filter="url(#b10)">
<path d="M1008.5 2066.3C1019.8 2068.6 1053.6 2073.8 1076.2 2079.9C1098.7 2085.9 1121.2 2094.1 1143.8 2102.4C1166.3 2110.7 1185.9 2123.1 1211.4 2129.5C1237.0 2135.8 1282.8 2138.8 1297.1 2140.7" fill="none" stroke="rgb(82,82,82)" stroke-width="31.6" stroke-linecap="round" stroke-linejoin="round"/>
</g></g>
<g clip-path="url(#cBL)">
<g filter="url(#b5)">
<path d="M1053.6 2075.3C1066.4 2078.4 1105.5 2085.1 1130.3 2093.4C1155.1 2101.6 1190.4 2119.7 1202.4 2124.9" fill="none" stroke="rgb(92,92,92)" stroke-width="9.9" stroke-linecap="round" stroke-linejoin="round"/>
</g></g>
<g clip-path="url(#cBL)">
<g filter="url(#b8)">
<path d="M1166.3 2093.4C1177.6 2096.4 1212.2 2109.2 1234.0 2111.4C1255.8 2113.7 1286.6 2107.7 1297.1 2106.9" fill="none" stroke="rgb(76,76,76)" stroke-width="13.5" stroke-linecap="round" stroke-linejoin="round"/>
</g></g>
<g clip-path="url(#cBL)">
<g filter="url(#b20)">
<ellipse cx="1166.3" cy="1976.2" rx="54.1" ry="40.6" fill="rgb(48,48,48)"/>
</g></g>
<g clip-path="url(#cBL)">
<g filter="url(#b4)">
<path d="M895.8 1834.1C899.6 1830.9 910.8 1820.2 918.3 1814.7C925.9 1809.2 929.6 1804.6 940.9 1801.2C952.2 1797.8 970.9 1795.2 986.0 1794.4C1001.0 1793.7 1017.5 1794.4 1031.1 1796.7C1044.6 1799.0 1057.4 1808.3 1067.1 1808.0C1076.9 1807.6 1080.7 1795.2 1089.7 1794.4C1098.7 1793.7 1110.7 1799.7 1121.2 1803.5C1131.8 1807.2 1141.5 1812.5 1152.8 1817.0C1164.1 1821.5 1179.1 1830.9 1188.9 1830.5C1198.6 1830.1 1204.7 1820.7 1211.4 1814.7C1218.2 1808.7 1221.9 1798.6 1229.5 1794.4C1237.0 1790.3 1245.2 1787.7 1256.5 1789.9C1267.8 1792.2 1290.3 1805.0 1297.1 1808.0" fill="none" stroke="rgb(92,92,92)" stroke-width="9.9" stroke-linecap="round" stroke-linejoin="round"/>
</g></g>
<g clip-path="url(#cBL)">
<g filter="url(#b1_3)">
<path d="M895.8 1834.1C899.6 1830.9 910.8 1820.2 918.3 1814.7C925.9 1809.2 929.6 1804.6 940.9 1801.2C952.2 1797.8 970.9 1795.2 986.0 1794.4C1001.0 1793.7 1017.5 1794.4 1031.1 1796.7C1044.6 1799.0 1057.4 1808.3 1067.1 1808.0C1076.9 1807.6 1080.7 1795.2 1089.7 1794.4C1098.7 1793.7 1110.7 1799.7 1121.2 1803.5C1131.8 1807.2 1141.5 1812.5 1152.8 1817.0C1164.1 1821.5 1179.1 1830.9 1188.9 1830.5C1198.6 1830.1 1204.7 1820.7 1211.4 1814.7C1218.2 1808.7 1221.9 1798.6 1229.5 1794.4C1237.0 1790.3 1245.2 1787.7 1256.5 1789.9C1267.8 1792.2 1290.3 1805.0 1297.1 1808.0" fill="none" stroke="rgb(148,148,148)" stroke-width="2.7" stroke-linecap="round" stroke-linejoin="round"/>
</g></g>
<g clip-path="url(#cBL)">
<g filter="url(#b2)">
<path d="M1139.3 1786.8C1141.5 1788.3 1148.3 1790.5 1152.8 1795.8C1157.3 1801.1 1161.1 1812.7 1166.3 1818.3C1171.6 1824.0 1181.4 1827.7 1184.4 1829.6" fill="none" stroke="rgb(115,115,115)" stroke-width="4.5" stroke-linecap="round" stroke-linejoin="round"/>
</g></g>
<g clip-path="url(#cBL)">
<g filter="url(#b1_5)">
<path d="M898.1 1834.1C900.7 1831.5 908.6 1824.7 913.8 1818.3C919.1 1812.0 924.7 1803.3 929.6 1795.8C934.5 1788.3 937.9 1778.5 943.1 1773.3C948.4 1768.0 958.2 1765.7 961.2 1764.2" fill="none" stroke="rgb(140,140,140)" stroke-width="2.7" stroke-linecap="round" stroke-linejoin="round"/>
</g></g>
<g clip-path="url(#cBL)">
<g filter="url(#b1_3)">
<path d="M1060.4 1705.6C1061.5 1708.6 1066.9 1716.1 1067.1 1723.7C1067.4 1731.2 1064.7 1743.8 1061.7 1750.7C1058.7 1757.6 1051.2 1762.7 1049.1 1765.1" fill="none" stroke="rgb(128,128,128)" stroke-width="2.3" stroke-linecap="round" stroke-linejoin="round"/>
</g></g>
<g clip-path="url(#cBL)">
<g filter="url(#b3)">
<path d="M864.2 1622.2C869.5 1624.5 884.9 1635.0 895.8 1635.7C906.7 1636.5 924.0 1628.2 929.6 1626.7" fill="none" stroke="rgb(92,92,92)" stroke-width="6.3" stroke-linecap="round" stroke-linejoin="round"/>
<path d="M778.6 1651.5C781.6 1650.0 792.1 1645.5 796.6 1642.5C801.1 1639.5 804.1 1635.0 805.6 1633.5" fill="none" stroke="rgb(128,128,128)" stroke-width="4.5" stroke-linecap="round" stroke-linejoin="round"/>
</g></g>
<g clip-path="url(#cBL)">
<g filter="url(#b7)">
<path d="M810.5 1625.8C812.3 1626.1 813.4 1632.1 817.4 1634.4C821.4 1636.6 828.9 1640.4 834.6 1639.5C840.3 1638.6 846.6 1632.2 851.8 1629.2C856.9 1626.2 864.4 1620.9 865.5 1621.5C866.7 1622.0 862.1 1628.8 858.6 1632.6C855.2 1636.5 848.0 1640.7 844.9 1644.7C841.7 1648.7 841.5 1652.1 839.7 1656.7C838.0 1661.3 836.3 1666.7 834.6 1672.1C832.9 1677.6 829.4 1684.2 829.4 1689.3C829.4 1694.5 834.3 1698.5 834.6 1703.1C834.9 1707.6 830.3 1712.8 831.2 1716.8C832.0 1720.8 839.7 1724.0 839.7 1727.1C839.7 1730.3 834.3 1732.3 831.2 1735.7C828.0 1739.1 824.3 1744.6 820.8 1747.7C817.4 1750.9 813.4 1751.7 810.5 1754.6C807.7 1757.5 805.4 1760.9 803.7 1764.9C802.0 1768.9 799.1 1774.9 800.2 1778.6C801.4 1782.4 810.5 1784.1 810.5 1787.2C810.5 1790.4 803.7 1795.0 800.2 1797.5C796.8 1800.1 793.9 1801.3 789.9 1802.7C785.9 1804.1 781.1 1804.1 776.2 1806.1C771.3 1808.1 765.3 1812.1 760.7 1814.7C756.1 1817.3 752.4 1819.6 748.7 1821.6C745.0 1823.6 738.4 1824.7 738.4 1826.7C738.4 1828.7 745.3 1830.7 748.7 1833.6C752.1 1836.5 756.7 1839.9 759.0 1843.9C761.3 1847.9 761.3 1852.5 762.4 1857.6C763.6 1862.8 764.2 1869.1 765.9 1874.8C767.6 1880.6 771.0 1884.3 772.8 1892.0C774.5 1899.7 776.8 1916.3 776.2 1921.2C775.6 1926.1 771.6 1924.6 769.3 1921.2C767.0 1917.8 765.3 1906.9 762.4 1900.6C759.6 1894.3 756.1 1889.4 752.1 1883.4C748.1 1877.4 742.4 1870.5 738.4 1864.5C734.4 1858.5 731.0 1852.8 728.1 1847.3C725.2 1841.9 723.2 1837.3 721.2 1831.9C719.2 1826.4 716.6 1820.4 716.1 1814.7C715.5 1809.0 715.8 1803.0 717.8 1797.5C719.8 1792.1 724.7 1786.7 728.1 1782.1C731.5 1777.5 736.1 1774.6 738.4 1770.0C740.7 1765.5 739.3 1759.2 741.8 1754.6C744.4 1750.0 749.3 1745.7 753.9 1742.6C758.4 1739.4 764.7 1738.6 769.3 1735.7C773.9 1732.8 780.8 1729.1 781.3 1725.4C781.9 1721.7 774.8 1717.1 772.8 1713.4C770.7 1709.6 767.9 1705.9 769.3 1703.1C770.7 1700.2 776.8 1699.3 781.3 1696.2C785.9 1693.0 793.4 1688.7 796.8 1684.2C800.2 1679.6 801.4 1673.6 802.0 1668.7C802.5 1663.8 799.9 1659.3 800.2 1655.0C800.5 1650.7 802.5 1646.7 803.7 1642.9C804.8 1639.2 806.0 1635.5 807.1 1632.6C808.3 1629.8 808.8 1625.5 810.5 1625.8Z" fill="rgb(128,128,128)" stroke="rgb(128,128,128)" stroke-width="26" stroke-linejoin="round"/>
</g></g>
<g clip-path="url(#cBL)">
<g filter="url(#b3_5)">
<path d="M810.5 1625.8C812.3 1626.1 813.4 1632.1 817.4 1634.4C821.4 1636.6 828.9 1640.4 834.6 1639.5C840.3 1638.6 846.6 1632.2 851.8 1629.2C856.9 1626.2 864.4 1620.9 865.5 1621.5C866.7 1622.0 862.1 1628.8 858.6 1632.6C855.2 1636.5 848.0 1640.7 844.9 1644.7C841.7 1648.7 841.5 1652.1 839.7 1656.7C838.0 1661.3 836.3 1666.7 834.6 1672.1C832.9 1677.6 829.4 1684.2 829.4 1689.3C829.4 1694.5 834.3 1698.5 834.6 1703.1C834.9 1707.6 830.3 1712.8 831.2 1716.8C832.0 1720.8 839.7 1724.0 839.7 1727.1C839.7 1730.3 834.3 1732.3 831.2 1735.7C828.0 1739.1 824.3 1744.6 820.8 1747.7C817.4 1750.9 813.4 1751.7 810.5 1754.6C807.7 1757.5 805.4 1760.9 803.7 1764.9C802.0 1768.9 799.1 1774.9 800.2 1778.6C801.4 1782.4 810.5 1784.1 810.5 1787.2C810.5 1790.4 803.7 1795.0 800.2 1797.5C796.8 1800.1 793.9 1801.3 789.9 1802.7C785.9 1804.1 781.1 1804.1 776.2 1806.1C771.3 1808.1 765.3 1812.1 760.7 1814.7C756.1 1817.3 752.4 1819.6 748.7 1821.6C745.0 1823.6 738.4 1824.7 738.4 1826.7C738.4 1828.7 745.3 1830.7 748.7 1833.6C752.1 1836.5 756.7 1839.9 759.0 1843.9C761.3 1847.9 761.3 1852.5 762.4 1857.6C763.6 1862.8 764.2 1869.1 765.9 1874.8C767.6 1880.6 771.0 1884.3 772.8 1892.0C774.5 1899.7 776.8 1916.3 776.2 1921.2C775.6 1926.1 771.6 1924.6 769.3 1921.2C767.0 1917.8 765.3 1906.9 762.4 1900.6C759.6 1894.3 756.1 1889.4 752.1 1883.4C748.1 1877.4 742.4 1870.5 738.4 1864.5C734.4 1858.5 731.0 1852.8 728.1 1847.3C725.2 1841.9 723.2 1837.3 721.2 1831.9C719.2 1826.4 716.6 1820.4 716.1 1814.7C715.5 1809.0 715.8 1803.0 717.8 1797.5C719.8 1792.1 724.7 1786.7 728.1 1782.1C731.5 1777.5 736.1 1774.6 738.4 1770.0C740.7 1765.5 739.3 1759.2 741.8 1754.6C744.4 1750.0 749.3 1745.7 753.9 1742.6C758.4 1739.4 764.7 1738.6 769.3 1735.7C773.9 1732.8 780.8 1729.1 781.3 1725.4C781.9 1721.7 774.8 1717.1 772.8 1713.4C770.7 1709.6 767.9 1705.9 769.3 1703.1C770.7 1700.2 776.8 1699.3 781.3 1696.2C785.9 1693.0 793.4 1688.7 796.8 1684.2C800.2 1679.6 801.4 1673.6 802.0 1668.7C802.5 1663.8 799.9 1659.3 800.2 1655.0C800.5 1650.7 802.5 1646.7 803.7 1642.9C804.8 1639.2 806.0 1635.5 807.1 1632.6C808.3 1629.8 808.8 1625.5 810.5 1625.8Z" fill="rgb(178,178,178)" stroke="rgb(178,178,178)" stroke-width="10" stroke-linejoin="round"/>
</g></g>
<g clip-path="url(#cBL)">
<g filter="url(#b1_2)">
<path d="M810.5 1625.8C812.3 1626.1 813.4 1632.1 817.4 1634.4C821.4 1636.6 828.9 1640.4 834.6 1639.5C840.3 1638.6 846.6 1632.2 851.8 1629.2C856.9 1626.2 864.4 1620.9 865.5 1621.5C866.7 1622.0 862.1 1628.8 858.6 1632.6C855.2 1636.5 848.0 1640.7 844.9 1644.7C841.7 1648.7 841.5 1652.1 839.7 1656.7C838.0 1661.3 836.3 1666.7 834.6 1672.1C832.9 1677.6 829.4 1684.2 829.4 1689.3C829.4 1694.5 834.3 1698.5 834.6 1703.1C834.9 1707.6 830.3 1712.8 831.2 1716.8C832.0 1720.8 839.7 1724.0 839.7 1727.1C839.7 1730.3 834.3 1732.3 831.2 1735.7C828.0 1739.1 824.3 1744.6 820.8 1747.7C817.4 1750.9 813.4 1751.7 810.5 1754.6C807.7 1757.5 805.4 1760.9 803.7 1764.9C802.0 1768.9 799.1 1774.9 800.2 1778.6C801.4 1782.4 810.5 1784.1 810.5 1787.2C810.5 1790.4 803.7 1795.0 800.2 1797.5C796.8 1800.1 793.9 1801.3 789.9 1802.7C785.9 1804.1 781.1 1804.1 776.2 1806.1C771.3 1808.1 765.3 1812.1 760.7 1814.7C756.1 1817.3 752.4 1819.6 748.7 1821.6C745.0 1823.6 738.4 1824.7 738.4 1826.7C738.4 1828.7 745.3 1830.7 748.7 1833.6C752.1 1836.5 756.7 1839.9 759.0 1843.9C761.3 1847.9 761.3 1852.5 762.4 1857.6C763.6 1862.8 764.2 1869.1 765.9 1874.8C767.6 1880.6 771.0 1884.3 772.8 1892.0C774.5 1899.7 776.8 1916.3 776.2 1921.2C775.6 1926.1 771.6 1924.6 769.3 1921.2C767.0 1917.8 765.3 1906.9 762.4 1900.6C759.6 1894.3 756.1 1889.4 752.1 1883.4C748.1 1877.4 742.4 1870.5 738.4 1864.5C734.4 1858.5 731.0 1852.8 728.1 1847.3C725.2 1841.9 723.2 1837.3 721.2 1831.9C719.2 1826.4 716.6 1820.4 716.1 1814.7C715.5 1809.0 715.8 1803.0 717.8 1797.5C719.8 1792.1 724.7 1786.7 728.1 1782.1C731.5 1777.5 736.1 1774.6 738.4 1770.0C740.7 1765.5 739.3 1759.2 741.8 1754.6C744.4 1750.0 749.3 1745.7 753.9 1742.6C758.4 1739.4 764.7 1738.6 769.3 1735.7C773.9 1732.8 780.8 1729.1 781.3 1725.4C781.9 1721.7 774.8 1717.1 772.8 1713.4C770.7 1709.6 767.9 1705.9 769.3 1703.1C770.7 1700.2 776.8 1699.3 781.3 1696.2C785.9 1693.0 793.4 1688.7 796.8 1684.2C800.2 1679.6 801.4 1673.6 802.0 1668.7C802.5 1663.8 799.9 1659.3 800.2 1655.0C800.5 1650.7 802.5 1646.7 803.7 1642.9C804.8 1639.2 806.0 1635.5 807.1 1632.6C808.3 1629.8 808.8 1625.5 810.5 1625.8Z" fill="#fff"/>
</g></g>
<g clip-path="url(#cBL)">
<g filter="url(#b1_0)">
<path d="M702.3 1775.2C702.0 1776.3 700.0 1780.1 700.6 1782.1C701.2 1784.1 704.9 1786.4 705.8 1787.2" fill="none" stroke="rgb(204,204,204)" stroke-width="2.5" stroke-linecap="round" stroke-linejoin="round"/>
</g></g>
<g clip-path="url(#cBL)">
<g filter="url(#b1_5)">
<path d="M772.8 1649.8C774.5 1650.1 779.6 1650.4 783.1 1651.5C786.5 1652.7 791.6 1655.8 793.4 1656.7" fill="none" stroke="rgb(178,178,178)" stroke-width="5.0" stroke-linecap="round" stroke-linejoin="round"/>
<path d="M903.3 1632.6C905.6 1631.8 913.0 1628.6 917.0 1627.5C921.0 1626.3 925.6 1626.1 927.3 1625.8" fill="none" stroke="rgb(140,140,140)" stroke-width="4.0" stroke-linecap="round" stroke-linejoin="round"/>
</g></g>
<g clip-path="url(#cBL)">
<g filter="url(#b1_2)">
<path d="M803.7 1787.2 L814.0 1783.8" fill="none" stroke="rgb(230,230,230)" stroke-width="4.0" stroke-linecap="round" stroke-linejoin="round"/>
</g></g>
<g clip-path="url(#cBL)">
<g filter="url(#b1_0)">
<path d="M753.9 1810.4 L756.4 1814.7" fill="none" stroke="rgb(230,230,230)" stroke-width="3.0" stroke-linecap="round" stroke-linejoin="round"/>
<path d="M829.4 1873.1 L832.9 1878.3" fill="none" stroke="rgb(230,230,230)" stroke-width="4.0" stroke-linecap="round" stroke-linejoin="round"/>
</g></g>
<g clip-path="url(#cBL)">
<g filter="url(#b4)">
<ellipse cx="868.9" cy="1680.7" rx="15.5" ry="12.0" fill="rgb(61,61,61)"/>
<ellipse cx="901.6" cy="1763.2" rx="12.9" ry="22.3" fill="rgb(43,43,43)"/>
</g></g>
<g clip-path="url(#cBL)">
<g filter="url(#b3_5)">
<ellipse cx="812.3" cy="1823.3" rx="10.3" ry="7.7" fill="rgb(69,69,69)"/>
</g></g>
<g clip-path="url(#cBL)">
<g filter="url(#b4)">
<ellipse cx="879.2" cy="1799.2" rx="10.3" ry="13.7" fill="rgb(69,69,69)"/>
</g></g>
<g clip-path="url(#cBL)">
<g filter="url(#b1_0)">
<path d="M894.7 1838.8C899.0 1835.3 912.7 1824.2 920.5 1818.1C928.2 1812.1 937.6 1805.3 941.1 1802.7" fill="none" stroke="rgb(217,217,217)" stroke-width="2.5" stroke-linecap="round" stroke-linejoin="round"/>
<path d="M930.8 1773.5C933.6 1771.8 942.5 1764.6 948.0 1763.2C953.4 1761.8 960.8 1764.9 963.4 1765.2" fill="none" stroke="rgb(204,204,204)" stroke-width="2.5" stroke-linecap="round" stroke-linejoin="round"/>
</g></g>
<g clip-path="url(#cBL)">
<g filter="url(#b1_2)">
<path d="M846.2 1725.9C849.2 1725.7 858.8 1724.4 864.2 1724.6C869.6 1724.7 876.3 1726.4 878.7 1726.8" fill="none" stroke="rgb(217,217,217)" stroke-width="2.3" stroke-linecap="round" stroke-linejoin="round"/>
</g></g>
<g clip-path="url(#cBL)">
<g filter="url(#b1_0)">
<path d="M837.2 1729.1 L850.7 1727.3" fill="none" stroke="rgb(51,51,51)" stroke-width="1.8" stroke-linecap="round" stroke-linejoin="round"/>
</g></g>
<g clip-path="url(#cBL)">
<g filter="url(#b1_2)">
<path d="M701.9 1775.5C702.7 1777.4 703.8 1784.1 706.4 1786.8C709.1 1789.4 715.8 1790.5 717.7 1791.3" fill="none" stroke="rgb(178,178,178)" stroke-width="2.3" stroke-linecap="round" stroke-linejoin="round"/>
</g></g>
<g clip-path="url(#cBL)">
<g filter="url(#b3)">
<path d="M720.0 1809.3C722.2 1814.6 728.2 1829.6 733.5 1840.9C738.7 1852.2 745.5 1865.7 751.5 1877.0C757.5 1888.2 763.5 1899.5 769.5 1908.5C775.6 1917.5 781.6 1924.3 787.6 1931.1C793.6 1937.8 798.9 1941.6 805.6 1949.1C812.4 1956.6 820.6 1966.4 828.2 1976.2C835.7 1985.9 843.2 1997.9 850.7 2007.7C858.2 2017.5 866.5 2025.0 873.3 2034.8C880.0 2044.5 886.0 2056.6 891.3 2066.3C896.5 2076.1 899.6 2085.9 904.8 2093.4C910.1 2100.9 915.3 2105.4 922.9 2111.4C930.4 2117.4 940.9 2124.2 949.9 2129.5C958.9 2134.7 972.4 2140.7 977.0 2143.0" fill="none" stroke="rgb(128,128,128)" stroke-width="7.2" stroke-linecap="round" stroke-linejoin="round"/>
</g></g>
<g clip-path="url(#cBL)">
<g filter="url(#b1_3)">
<path d="M771.8 1913.0C774.4 1916.8 781.9 1928.8 787.6 1935.6C793.2 1942.3 798.9 1946.5 805.6 1953.6C812.4 1960.7 824.4 1974.3 828.2 1978.4" fill="none" stroke="rgb(255,255,255)" stroke-width="5.4" stroke-linecap="round" stroke-linejoin="round"/>
<path d="M787.6 1931.1C790.6 1934.1 798.9 1941.6 805.6 1949.1C812.4 1956.6 824.4 1971.6 828.2 1976.2" fill="none" stroke="rgb(255,255,255)" stroke-width="3.6" stroke-linecap="round" stroke-linejoin="round"/>
</g></g>
<g clip-path="url(#cBL)">
<g filter="url(#b1_2)">
<path d="M828.2 1976.2C831.9 1981.4 843.2 1997.9 850.7 2007.7C858.2 2017.5 866.5 2025.0 873.3 2034.8C880.0 2044.5 888.3 2061.1 891.3 2066.3" fill="none" stroke="rgb(204,204,204)" stroke-width="2.7" stroke-linecap="round" stroke-linejoin="round"/>
</g></g>
<g clip-path="url(#cBL)">
<g filter="url(#b1_3)">
<path d="M891.3 2066.3C893.5 2070.8 899.6 2085.9 904.8 2093.4C910.1 2100.9 915.3 2105.4 922.9 2111.4C930.4 2117.4 940.9 2124.2 949.9 2129.5C958.9 2134.7 972.4 2140.7 977.0 2143.0" fill="none" stroke="rgb(153,153,153)" stroke-width="2.7" stroke-linecap="round" stroke-linejoin="round"/>
</g></g>
<g clip-path="url(#cBR)">
<g filter="url(#b30)">
<path d="M1233.9 1343.9C1311.3 1283.8 1628.5 1315.4 1698.3 1343.9C1768.2 1372.5 1670.5 1470.2 1653.3 1515.3C1636.0 1560.4 1620.9 1588.9 1594.6 1614.5C1568.3 1640.0 1527.0 1655.0 1495.4 1668.6C1463.9 1682.1 1448.9 1689.6 1405.3 1695.6C1361.7 1701.6 1262.5 1763.3 1233.9 1704.6C1205.4 1646.0 1156.5 1404.0 1233.9 1343.9Z" fill="rgb(55,55,55)"/>
<path d="M1233.9 1343.9C1277.5 1292.8 1457.9 1315.4 1495.4 1343.9C1533.0 1372.5 1474.4 1470.2 1459.4 1515.3C1444.3 1560.4 1442.8 1591.9 1405.3 1614.5C1367.7 1637.0 1262.5 1695.6 1233.9 1650.5C1205.4 1605.4 1190.3 1395.0 1233.9 1343.9Z" fill="rgb(50,50,50)"/>
</g></g>
<g clip-path="url(#cBR)">
<g filter="url(#b24)">
<path d="M1630.7 1452.1C1653.3 1427.3 1713.4 1431.1 1766.0 1434.1C1818.6 1437.1 1896.7 1465.7 1946.3 1470.2C1995.9 1474.7 2048.5 1453.6 2063.6 1461.2C2078.6 1468.7 2051.5 1494.2 2036.5 1515.3C2021.5 1536.3 1993.7 1567.9 1973.4 1587.4C1953.1 1606.9 1926.0 1613.0 1914.8 1632.5C1903.5 1652.0 1915.5 1682.1 1905.7 1704.6C1896.0 1727.2 1875.7 1748.2 1856.2 1767.8C1836.6 1787.3 1814.8 1809.8 1788.5 1821.9C1762.2 1833.9 1724.6 1845.9 1698.3 1839.9C1672.0 1833.9 1645.0 1809.8 1630.7 1785.8C1616.4 1761.7 1612.7 1729.4 1612.7 1695.6C1612.7 1661.8 1627.7 1623.5 1630.7 1582.9C1633.7 1542.3 1608.2 1476.9 1630.7 1452.1Z" fill="rgb(94,94,94)"/>
</g></g>
<g clip-path="url(#cBR)">
<g filter="url(#b16)">
<path d="M1441.3 1785.8C1456.4 1764.8 1509.0 1752.7 1540.5 1749.7C1572.1 1746.7 1600.6 1754.2 1630.7 1767.8C1660.8 1781.3 1687.1 1823.4 1720.9 1830.9C1754.7 1838.4 1811.1 1805.3 1833.6 1812.9C1856.2 1820.4 1856.2 1842.9 1856.2 1876.0C1856.2 1909.0 1848.6 1996.2 1833.6 2011.2C1818.6 2026.3 1792.3 1984.9 1766.0 1966.2C1739.7 1947.4 1705.9 1911.3 1675.8 1898.5C1645.7 1885.7 1614.2 1889.5 1585.6 1889.5C1557.1 1889.5 1527.0 1900.8 1504.5 1898.5C1481.9 1896.3 1460.9 1894.8 1450.4 1876.0C1439.8 1857.2 1426.3 1806.8 1441.3 1785.8Z" fill="rgb(122,122,122)"/>
</g></g>
<g clip-path="url(#cBR)">
<g filter="url(#b14)">
<path d="M1486.4 1821.9C1501.5 1811.3 1554.1 1803.8 1585.6 1803.8C1617.2 1803.8 1645.7 1814.4 1675.8 1821.9C1705.9 1829.4 1740.4 1845.9 1766.0 1848.9C1791.5 1851.9 1818.6 1831.6 1829.1 1839.9C1839.6 1848.2 1847.1 1890.3 1829.1 1898.5C1811.1 1906.8 1754.0 1891.8 1720.9 1889.5C1687.8 1887.2 1660.8 1885.0 1630.7 1885.0C1600.6 1885.0 1563.1 1892.5 1540.5 1889.5C1518.0 1886.5 1504.5 1878.2 1495.4 1867.0C1486.4 1855.7 1471.4 1832.4 1486.4 1821.9Z" fill="rgb(143,143,143)"/>
</g></g>
<g clip-path="url(#cBR)">
<g filter="url(#b22)">
<path d="M1288.0 1776.8C1303.8 1739.2 1354.2 1776.8 1382.7 1785.8C1411.3 1794.8 1436.1 1812.1 1459.4 1830.9C1482.7 1849.7 1512.0 1868.5 1522.5 1898.5C1533.0 1928.6 1533.0 1986.4 1522.5 2011.2C1512.0 2036.0 1486.4 2043.6 1459.4 2047.3C1432.3 2051.1 1388.7 2039.8 1360.2 2033.8C1331.6 2027.8 1300.1 2054.1 1288.0 2011.2C1276.0 1968.4 1272.3 1814.4 1288.0 1776.8Z" fill="rgb(94,94,94)"/>
</g></g>
<g clip-path="url(#cBR)">
<g filter="url(#b20)">
<ellipse cx="1387.2" cy="1912.0" rx="76.7" ry="49.6" fill="rgb(105,105,105)"/>
<path d="M1288.0 2038.3C1315.1 2013.5 1400.8 2048.8 1450.4 2056.3C1500.0 2063.8 1518.0 2075.9 1585.6 2083.4C1653.3 2090.9 1774.2 2086.4 1856.2 2101.4C1938.1 2116.4 2040.3 2156.3 2077.1 2173.6C2113.9 2190.8 2208.6 2199.9 2077.1 2205.1C1945.6 2210.4 1419.5 2232.9 1288.0 2205.1C1156.5 2177.3 1261.0 2063.1 1288.0 2038.3Z" fill="rgb(70,70,70)"/>
</g></g>
<g clip-path="url(#cBR)">
<g filter="url(#b26)">
<ellipse cx="1360.2" cy="2124.0" rx="90.2" ry="54.1" fill="rgb(60,60,60)"/>
</g></g>
<g clip-path="url(#cBR)">
<g filter="url(#b18)">
<ellipse cx="1698.3" cy="2069.9" rx="171.3" ry="31.6" fill="rgb(89,89,89)"/>
</g></g>
<g clip-path="url(#cBR)">
<g filter="url(#b13)">
<path d="M2081.6 1447.6C2079.0 1337.2 2073.0 1478.4 2065.8 1497.2C2058.7 1516.0 2048.9 1542.3 2038.8 1560.4C2028.6 1578.4 2015.8 1590.4 2004.9 1605.4C1994.0 1620.5 1982.0 1635.5 1973.4 1650.5C1964.7 1665.6 1956.8 1676.8 1953.1 1695.6C1949.3 1714.4 1952.7 1744.5 1950.8 1763.3C1949.0 1782.0 1946.7 1793.3 1941.8 1808.3C1936.9 1823.4 1929.4 1838.4 1921.5 1853.4C1913.6 1868.5 1903.1 1879.7 1894.5 1898.5C1885.8 1917.3 1870.1 1941.4 1869.7 1966.2C1869.3 1991.0 1874.9 2021.8 1892.2 2047.3C1909.5 2072.9 1941.8 2100.7 1973.4 2119.5C2004.9 2138.2 2063.6 2272.0 2081.6 2160.0C2099.6 2048.1 2084.2 1558.1 2081.6 1447.6Z" fill="rgb(51,51,51)"/>
</g></g>
<g clip-path="url(#cBR)">
<g filter="url(#b18)">
<path d="M2081.6 1456.7C2078.6 1431.1 2072.6 1479.9 2063.6 1497.2C2054.5 1514.5 2039.5 1543.8 2027.5 1560.4C2015.5 1576.9 2000.4 1584.4 1991.4 1596.4C1982.4 1608.4 1958.4 1623.5 1973.4 1632.5C1988.4 1641.5 2063.6 1679.8 2081.6 1650.5C2099.6 1621.2 2084.6 1482.2 2081.6 1456.7Z" fill="rgb(61,61,61)"/>
</g></g>
<g clip-path="url(#cBR)">
<g filter="url(#b12)">
<path d="M1937.3 1632.5C1935.1 1641.5 1925.7 1667.1 1923.8 1686.6C1921.9 1706.1 1926.8 1730.2 1926.0 1749.7C1925.3 1769.3 1923.4 1787.3 1919.3 1803.8C1915.1 1820.4 1904.2 1841.4 1901.2 1848.9" fill="none" stroke="rgb(102,102,102)" stroke-width="40.6" stroke-linecap="round" stroke-linejoin="round"/>
</g></g>
<g clip-path="url(#cBR)">
<g filter="url(#b26)">
<ellipse cx="2014.0" cy="1876.0" rx="54.1" ry="135.3" fill="rgb(46,46,46)"/>
</g></g>
<g clip-path="url(#cBR)">
<g filter="url(#b7)">
<path d="M1784.0 1389.0C1746.4 1392.0 1832.9 1399.2 1856.2 1407.1C1879.4 1414.9 1905.0 1428.5 1923.8 1436.4C1942.6 1444.3 1953.8 1452.5 1968.9 1454.4C1983.9 1456.3 1995.2 1451.4 2014.0 1447.6C2032.7 1443.9 2070.3 1441.6 2081.6 1431.9C2092.9 1422.1 2131.2 1396.2 2081.6 1389.0C2032.0 1381.9 1821.6 1386.0 1784.0 1389.0Z" fill="rgb(40,40,40)"/>
</g></g>
<g clip-path="url(#cBR)">
<g filter="url(#b6)">
<path d="M1468.4 1389.0C1459.4 1392.8 1490.9 1405.2 1504.5 1411.6C1518.0 1417.9 1534.5 1421.3 1549.5 1427.3C1564.6 1433.4 1584.1 1446.5 1594.6 1447.6C1605.2 1448.8 1614.2 1440.9 1612.7 1434.1C1611.2 1427.3 1594.6 1414.6 1585.6 1407.1C1576.6 1399.5 1578.1 1392.0 1558.6 1389.0C1539.0 1386.0 1477.4 1385.3 1468.4 1389.0Z" fill="rgb(41,41,41)"/>
</g></g>
<g clip-path="url(#cBR)">
<g filter="url(#b3_5)">
<path d="M1441.3 1391.3C1448.1 1395.4 1468.4 1409.5 1481.9 1416.1C1495.4 1422.6 1509.7 1425.1 1522.5 1430.5C1535.3 1435.9 1547.3 1442.3 1558.6 1448.5C1569.8 1454.8 1581.1 1460.6 1590.1 1467.9C1599.1 1475.3 1608.9 1488.6 1612.7 1492.7" fill="none" stroke="rgb(102,102,102)" stroke-width="8.1" stroke-linecap="round" stroke-linejoin="round"/>
</g></g>
<g clip-path="url(#cBR)">
<g filter="url(#b8)">
<path d="M1585.6 1447.6C1593.1 1446.9 1611.9 1446.1 1630.7 1443.1C1649.5 1440.1 1675.8 1435.6 1698.3 1429.6C1720.9 1423.6 1750.9 1412.3 1766.0 1407.1C1781.0 1401.8 1784.8 1399.5 1788.5 1398.0" fill="none" stroke="rgb(92,92,92)" stroke-width="13.5" stroke-linecap="round" stroke-linejoin="round"/>
</g></g>
<g clip-path="url(#cBR)">
<g filter="url(#b6)">
<path d="M1536.9 1921.1C1541.7 1915.1 1550.5 1915.1 1563.1 1917.5C1575.7 1919.9 1596.9 1927.2 1612.7 1935.5C1628.5 1943.8 1649.3 1954.4 1657.8 1967.1C1666.2 1979.7 1666.0 2000.0 1663.2 2011.2C1660.3 2022.5 1653.4 2028.5 1640.6 2034.7C1627.9 2040.8 1600.0 2049.0 1586.5 2048.2C1573.0 2047.5 1567.0 2039.9 1559.5 2030.2C1552.0 2020.4 1545.6 2002.4 1541.4 1989.6C1537.3 1976.8 1535.4 1964.9 1534.7 1953.5C1533.9 1942.1 1532.2 1927.1 1536.9 1921.1Z" fill="rgb(74,74,74)"/>
</g></g>
<g clip-path="url(#cBR)">
<g filter="url(#b10)">
<path d="M1549.5 1939.1C1554.1 1927.8 1579.6 1937.6 1594.6 1943.6C1609.7 1949.6 1630.7 1963.9 1639.7 1975.2C1648.7 1986.4 1654.8 2002.2 1648.7 2011.2C1642.7 2020.3 1617.2 2029.3 1603.7 2029.3C1590.1 2029.3 1576.6 2026.3 1567.6 2011.2C1558.6 1996.2 1545.0 1950.4 1549.5 1939.1Z" fill="rgb(56,56,56)"/>
</g></g>
<g clip-path="url(#cBR)">
<g filter="url(#b6)">
<path d="M1667.7 1989.6C1669.8 1980.6 1683.5 1970.8 1689.3 1958.0C1695.2 1945.3 1696.1 1919.0 1702.9 1912.9C1709.6 1906.9 1723.1 1912.9 1729.9 1922.0C1736.7 1931.0 1737.4 1950.7 1743.4 1967.1C1749.4 1983.4 1756.1 2008.2 1766.0 2020.3C1775.9 2032.3 1802.9 2034.5 1802.9 2039.2C1802.9 2043.9 1782.5 2049.0 1766.0 2048.2C1749.4 2047.5 1718.6 2040.7 1703.8 2034.7C1688.9 2028.7 1682.7 2019.7 1676.7 2012.1C1670.7 2004.6 1665.6 1998.6 1667.7 1989.6Z" fill="rgb(69,69,69)"/>
</g></g>
<g clip-path="url(#cBR)">
<g filter="url(#b8)">
<path d="M1689.3 1979.7C1690.8 1966.2 1704.4 1944.4 1711.9 1943.6C1719.4 1942.9 1728.4 1962.4 1734.4 1975.2C1740.4 1987.9 1753.2 2012.0 1747.9 2020.3C1742.7 2028.5 1712.6 2031.5 1702.9 2024.8C1693.1 2018.0 1687.8 1993.2 1689.3 1979.7Z" fill="rgb(51,51,51)"/>
</g></g>
<g clip-path="url(#cBR)">
<g filter="url(#mot2)">
<path d="M1536.9 1921.1C1541.7 1915.1 1550.5 1915.1 1563.1 1917.5C1575.7 1919.9 1596.9 1927.2 1612.7 1935.5C1628.5 1943.8 1649.3 1954.4 1657.8 1967.1C1666.2 1979.7 1666.0 2000.0 1663.2 2011.2C1660.3 2022.5 1653.4 2028.5 1640.6 2034.7C1627.9 2040.8 1600.0 2049.0 1586.5 2048.2C1573.0 2047.5 1567.0 2039.9 1559.5 2030.2C1552.0 2020.4 1545.6 2002.4 1541.4 1989.6C1537.3 1976.8 1535.4 1964.9 1534.7 1953.5C1533.9 1942.1 1532.2 1927.1 1536.9 1921.1Z" fill="#000" fill-opacity="0.50"/>
<path d="M1667.7 1989.6C1669.8 1980.6 1683.5 1970.8 1689.3 1958.0C1695.2 1945.3 1696.1 1919.0 1702.9 1912.9C1709.6 1906.9 1723.1 1912.9 1729.9 1922.0C1736.7 1931.0 1737.4 1950.7 1743.4 1967.1C1749.4 1983.4 1756.1 2008.2 1766.0 2020.3C1775.9 2032.3 1802.9 2034.5 1802.9 2039.2C1802.9 2043.9 1782.5 2049.0 1766.0 2048.2C1749.4 2047.5 1718.6 2040.7 1703.8 2034.7C1688.9 2028.7 1682.7 2019.7 1676.7 2012.1C1670.7 2004.6 1665.6 1998.6 1667.7 1989.6Z" fill="#000" fill-opacity="0.50"/>
</g></g>
<g clip-path="url(#cBR)">
<g filter="url(#mot)">
<path d="M2081.6 1447.6C2079.0 1337.2 2073.0 1478.4 2065.8 1497.2C2058.7 1516.0 2048.9 1542.3 2038.8 1560.4C2028.6 1578.4 2015.8 1590.4 2004.9 1605.4C1994.0 1620.5 1982.0 1635.5 1973.4 1650.5C1964.7 1665.6 1956.8 1676.8 1953.1 1695.6C1949.3 1714.4 1952.7 1744.5 1950.8 1763.3C1949.0 1782.0 1946.7 1793.3 1941.8 1808.3C1936.9 1823.4 1929.4 1838.4 1921.5 1853.4C1913.6 1868.5 1903.1 1879.7 1894.5 1898.5C1885.8 1917.3 1870.1 1941.4 1869.7 1966.2C1869.3 1991.0 1874.9 2021.8 1892.2 2047.3C1909.5 2072.9 1941.8 2100.7 1973.4 2119.5C2004.9 2138.2 2063.6 2272.0 2081.6 2160.0C2099.6 2048.1 2084.2 1558.1 2081.6 1447.6Z" fill="#000" fill-opacity="0.30"/>
<path d="M1288.0 2038.3C1315.1 2013.5 1400.8 2048.8 1450.4 2056.3C1500.0 2063.8 1518.0 2075.9 1585.6 2083.4C1653.3 2090.9 1774.2 2086.4 1856.2 2101.4C1938.1 2116.4 2040.3 2156.3 2077.1 2173.6C2113.9 2190.8 2208.6 2199.9 2077.1 2205.1C1945.6 2210.4 1419.5 2232.9 1288.0 2205.1C1156.5 2177.3 1261.0 2063.1 1288.0 2038.3Z" fill="#000" fill-opacity="0.18"/>
<path d="M1288.0 1776.8C1303.8 1739.2 1354.2 1776.8 1382.7 1785.8C1411.3 1794.8 1436.1 1812.1 1459.4 1830.9C1482.7 1849.7 1512.0 1868.5 1522.5 1898.5C1533.0 1928.6 1533.0 1986.4 1522.5 2011.2C1512.0 2036.0 1486.4 2043.6 1459.4 2047.3C1432.3 2051.1 1388.7 2039.8 1360.2 2033.8C1331.6 2027.8 1300.1 2054.1 1288.0 2011.2C1276.0 1968.4 1272.3 1814.4 1288.0 1776.8Z" fill="#000" fill-opacity="0.14"/>
</g></g>
<g clip-path="url(#cBR)">
<g filter="url(#b10)">
<path d="M1757.0 1853.4C1770.5 1834.6 1816.3 1819.6 1829.1 1830.9C1841.9 1842.2 1832.1 1891.0 1833.6 1921.1C1835.1 1951.1 1843.4 1993.2 1838.1 2011.2C1832.9 2029.3 1814.1 2030.8 1802.0 2029.3C1790.0 2027.8 1775.0 2016.5 1766.0 2002.2C1757.0 1987.9 1749.4 1968.4 1747.9 1943.6C1746.4 1918.8 1743.4 1872.2 1757.0 1853.4Z" fill="rgb(110,110,110)"/>
</g></g>
<g clip-path="url(#cBR)">
<g filter="url(#b8)">
<path d="M1844.9 1948.1C1849.0 1934.6 1864.8 1918.1 1874.2 1921.1C1883.6 1924.1 1893.7 1943.6 1901.2 1966.2C1908.8 1988.7 1920.8 2036.8 1919.3 2056.3C1917.8 2075.9 1901.2 2084.9 1892.2 2083.4C1883.2 2081.9 1872.3 2060.8 1865.2 2047.3C1858.0 2033.8 1852.8 2018.8 1849.4 2002.2C1846.0 1985.7 1840.7 1961.6 1844.9 1948.1Z" fill="rgb(59,59,59)"/>
</g></g>
<g clip-path="url(#cBR)">
<g filter="url(#b5)">
<ellipse cx="1653.3" cy="1844.4" rx="29.3" ry="16.2" fill="rgb(204,204,204)"/>
</g></g>
<g clip-path="url(#cBR)">
<g filter="url(#b8)">
<ellipse cx="1630.7" cy="1812.9" rx="18.0" ry="27.1" fill="rgb(153,153,153)"/>
</g></g>
<g clip-path="url(#cBR)">
<g filter="url(#b7)">
<ellipse cx="1540.5" cy="1848.9" rx="27.1" ry="18.0" fill="rgb(168,168,168)"/>
</g></g>
<g clip-path="url(#cBR)">
<g filter="url(#b10)">
<ellipse cx="1585.6" cy="1871.5" rx="40.6" ry="18.0" fill="rgb(128,128,128)"/>
</g></g>
<g clip-path="url(#cBR)">
<g filter="url(#b12)">
<ellipse cx="1878.7" cy="1740.7" rx="31.6" ry="27.1" fill="rgb(128,128,128)" transform="rotate(-40.0 1878.7 1740.7)"/>
</g></g>
<g clip-path="url(#cBR)">
<g filter="url(#b8)">
<ellipse cx="1824.6" cy="1943.6" rx="13.5" ry="54.1" fill="rgb(140,140,140)"/>
</g></g>
<g clip-path="url(#cBR)">
<g filter="url(#b10)">
<path d="M1630.7 1668.6C1636.7 1659.5 1660.8 1652.8 1675.8 1650.5C1690.8 1648.3 1709.6 1649.0 1720.9 1655.0C1732.2 1661.1 1744.9 1676.8 1743.4 1686.6C1741.9 1696.4 1724.6 1707.6 1711.9 1713.7C1699.1 1719.7 1678.8 1724.2 1666.8 1722.7C1654.8 1721.2 1645.7 1713.7 1639.7 1704.6C1633.7 1695.6 1624.7 1677.6 1630.7 1668.6Z" fill="rgb(64,64,64)"/>
</g></g>
<g clip-path="url(#cBR)">
<g filter="url(#b4)">
<path d="M1901.2 1714.6C1897.5 1719.1 1887.7 1731.8 1878.7 1741.6C1869.7 1751.4 1858.4 1762.1 1847.1 1773.2C1835.9 1784.3 1822.3 1798.7 1811.1 1808.3C1799.8 1818.0 1794.5 1826.2 1779.5 1830.9C1764.5 1835.5 1738.2 1833.1 1720.9 1836.3C1703.6 1839.5 1683.3 1847.6 1675.8 1849.8" fill="none" stroke="rgb(128,128,128)" stroke-width="11.7" stroke-linecap="round" stroke-linejoin="round"/>
</g></g>
<g clip-path="url(#cBR)">
<g filter="url(#b1_6)">
<path d="M1901.2 1714.6C1897.5 1719.1 1887.7 1731.8 1878.7 1741.6C1869.7 1751.4 1858.4 1762.1 1847.1 1773.2C1835.9 1784.3 1822.3 1798.7 1811.1 1808.3C1799.8 1818.0 1794.5 1826.2 1779.5 1830.9C1764.5 1835.5 1738.2 1833.1 1720.9 1836.3C1703.6 1839.5 1683.3 1847.6 1675.8 1849.8" fill="none" stroke="rgb(158,158,158)" stroke-width="3.6" stroke-linecap="round" stroke-linejoin="round"/>
</g></g>
<g clip-path="url(#cBR)">
<g filter="url(#b4)">
<path d="M2056.8 1456.7C2053.4 1463.6 2045.9 1482.2 2036.5 1498.1C2027.1 1514.1 2014.0 1537.2 2000.4 1552.2C1986.9 1567.3 1968.9 1577.8 1955.3 1588.3C1941.8 1598.8 1927.4 1604.8 1919.3 1615.4C1911.2 1625.9 1908.0 1639.4 1906.7 1651.4C1905.3 1663.5 1912.1 1677.0 1911.2 1687.5C1910.3 1698.0 1902.9 1710.0 1901.2 1714.6" fill="none" stroke="rgb(117,117,117)" stroke-width="9.9" stroke-linecap="round" stroke-linejoin="round"/>
</g></g>
<g clip-path="url(#cBR)">
<g filter="url(#b1_6)">
<path d="M2056.8 1456.7C2053.4 1463.6 2045.9 1482.2 2036.5 1498.1C2027.1 1514.1 2014.0 1537.2 2000.4 1552.2C1986.9 1567.3 1968.9 1577.8 1955.3 1588.3C1941.8 1598.8 1927.4 1604.8 1919.3 1615.4C1911.2 1625.9 1908.0 1639.4 1906.7 1651.4C1905.3 1663.5 1912.1 1677.0 1911.2 1687.5C1910.3 1698.0 1902.9 1710.0 1901.2 1714.6" fill="none" stroke="rgb(148,148,148)" stroke-width="3.2" stroke-linecap="round" stroke-linejoin="round"/>
</g></g>
<g clip-path="url(#cBR)">
<g filter="url(#b3)">
<path d="M1901.2 1714.6C1903.6 1719.1 1912.5 1729.6 1915.7 1741.6C1918.8 1753.6 1922.6 1771.7 1920.2 1786.7C1917.8 1801.7 1908.8 1818.3 1901.2 1831.8C1893.7 1845.3 1882.6 1853.0 1875.1 1867.9C1867.6 1882.7 1859.3 1912.2 1856.2 1921.1" fill="none" stroke="rgb(102,102,102)" stroke-width="6.3" stroke-linecap="round" stroke-linejoin="round"/>
</g></g>
<g clip-path="url(#cBR)">
<g filter="url(#b3_5)">
<path d="M1852.5 1808.3C1850.3 1815.9 1842.5 1838.4 1839.0 1853.4C1835.6 1868.5 1832.7 1883.5 1831.8 1898.5C1830.9 1913.5 1832.1 1928.6 1833.6 1943.6C1835.1 1958.6 1837.7 1975.0 1840.8 1988.7C1844.0 2002.4 1847.6 2014.2 1852.5 2025.7C1857.5 2037.1 1866.1 2049.0 1870.6 2057.2C1875.1 2065.5 1878.1 2072.3 1879.6 2075.3" fill="none" stroke="rgb(158,158,158)" stroke-width="9.9" stroke-linecap="round" stroke-linejoin="round"/>
</g></g>
<g clip-path="url(#cBR)">
<g filter="url(#b1_2)">
<path d="M1839.0 1853.4C1837.8 1860.9 1832.7 1883.5 1831.8 1898.5C1830.9 1913.5 1832.1 1928.6 1833.6 1943.6C1835.1 1958.6 1837.7 1975.0 1840.8 1988.7C1844.0 2002.4 1850.6 2019.5 1852.5 2025.7" fill="none" stroke="rgb(250,250,250)" stroke-width="2.7" stroke-linecap="round" stroke-linejoin="round"/>
</g></g>
<g clip-path="url(#cBR)">
<g filter="url(#b2_5)">
<path d="M1852.5 1966.2C1855.6 1977.6 1862.5 2015.0 1870.6 2034.7C1878.7 2054.4 1896.1 2076.0 1901.2 2084.3" fill="none" stroke="rgb(92,92,92)" stroke-width="4.5" stroke-linecap="round" stroke-linejoin="round"/>
</g></g>
<g clip-path="url(#cBR)">
<g filter="url(#b6)">
<path d="M1879.6 2075.3C1890.7 2079.8 1920.2 2090.3 1946.3 2102.3C1972.5 2114.3 2014.0 2136.9 2036.5 2147.4C2059.0 2157.9 2074.1 2162.4 2081.6 2165.4" fill="none" stroke="rgb(94,94,94)" stroke-width="11.7" stroke-linecap="round" stroke-linejoin="round"/>
</g></g>
<g clip-path="url(#cBR)">
<g filter="url(#b3)">
<path d="M1522.5 1894.0C1524.8 1897.9 1534.5 1907.5 1536.0 1917.5C1537.5 1927.4 1531.5 1941.5 1531.5 1953.5C1531.5 1965.6 1533.0 1978.3 1536.0 1989.6C1539.0 2000.9 1544.3 2012.9 1549.5 2021.2C1554.8 2029.4 1564.6 2036.2 1567.6 2039.2" fill="none" stroke="rgb(153,153,153)" stroke-width="8.1" stroke-linecap="round" stroke-linejoin="round"/>
</g></g>
<g clip-path="url(#cBR)">
<g filter="url(#b1_3)">
<path d="M1522.5 1894.0C1524.8 1897.9 1534.5 1907.5 1536.0 1917.5C1537.5 1927.4 1532.3 1947.5 1531.5 1953.5" fill="none" stroke="rgb(242,242,242)" stroke-width="3.2" stroke-linecap="round" stroke-linejoin="round"/>
<path d="M1531.5 1953.5C1532.3 1959.5 1533.0 1978.3 1536.0 1989.6C1539.0 2000.9 1544.3 2012.9 1549.5 2021.2C1554.8 2029.4 1564.6 2036.2 1567.6 2039.2" fill="none" stroke="rgb(178,178,178)" stroke-width="2.3" stroke-linecap="round" stroke-linejoin="round"/>
<path d="M1678.1 1978.8C1675.6 1979.8 1665.7 1982.5 1663.2 1985.1C1660.7 1987.6 1661.7 1989.6 1663.2 1994.1C1664.7 1998.6 1667.7 2006.1 1672.2 2012.1C1676.7 2018.2 1687.2 2027.2 1690.2 2030.2" fill="none" stroke="rgb(204,204,204)" stroke-width="2.7" stroke-linecap="round" stroke-linejoin="round"/>
</g></g>
<g clip-path="url(#cBR)">
<g filter="url(#b2)">
<path d="M1702.9 1912.0C1701.0 1918.1 1695.7 1937.0 1691.6 1948.1C1687.4 1959.2 1680.3 1973.7 1678.1 1978.8" fill="none" stroke="rgb(128,128,128)" stroke-width="3.6" stroke-linecap="round" stroke-linejoin="round"/>
</g></g>
<g clip-path="url(#cBR)">
<g filter="url(#b1_8)">
<path d="M1630.7 1731.7C1633.1 1737.1 1640.5 1753.5 1645.1 1764.2C1649.8 1774.8 1655.7 1785.9 1658.7 1795.7C1661.7 1805.5 1660.9 1814.5 1663.2 1822.8C1665.4 1831.0 1670.7 1841.6 1672.2 1845.3" fill="none" stroke="rgb(158,158,158)" stroke-width="3.6" stroke-linecap="round" stroke-linejoin="round"/>
</g></g>
<g clip-path="url(#cBR)">
<g filter="url(#b1_2)">
<path d="M1564.0 1695.6C1567.6 1693.4 1578.9 1682.7 1585.6 1682.1C1592.4 1681.5 1599.9 1686.6 1604.6 1692.0C1609.2 1697.4 1613.7 1707.2 1613.6 1714.6C1613.4 1721.9 1605.3 1732.6 1603.7 1736.2" fill="none" stroke="rgb(204,204,204)" stroke-width="2.3" stroke-linecap="round" stroke-linejoin="round"/>
<circle cx="1622.6" cy="1692.0" r="9.0" fill="none" stroke="rgb(215,215,215)" stroke-width="2.5"/>
<path d="M1601.4 1659.5 L1605.9 1668.6" fill="none" stroke="rgb(255,255,255)" stroke-width="4.1" stroke-linecap="round" stroke-linejoin="round"/>
<path d="M1619.4 1668.6C1621.3 1666.7 1626.4 1661.7 1630.7 1657.3C1635.0 1652.9 1642.7 1644.9 1645.1 1642.4" fill="none" stroke="rgb(242,242,242)" stroke-width="2.7" stroke-linecap="round" stroke-linejoin="round"/>
</g></g>
<g clip-path="url(#cBR)">
<g filter="url(#b2)">
<path d="M1645.1 1646.9C1650.2 1646.9 1666.0 1648.4 1675.8 1646.9C1685.6 1645.4 1696.1 1639.4 1703.8 1637.9C1711.4 1636.4 1718.8 1637.9 1721.8 1637.9" fill="none" stroke="rgb(115,115,115)" stroke-width="3.2" stroke-linecap="round" stroke-linejoin="round"/>
</g></g>
<g clip-path="url(#cBR)">
<g filter="url(#b1_3)">
<path d="M1464.8 1867.0C1467.0 1863.2 1473.8 1851.2 1478.3 1844.4C1482.8 1837.6 1488.8 1831.6 1491.8 1826.4C1494.8 1821.1 1495.6 1815.1 1496.3 1812.9" fill="none" stroke="rgb(178,178,178)" stroke-width="2.3" stroke-linecap="round" stroke-linejoin="round"/>
</g></g>
<g clip-path="url(#cBR)">
<g filter="url(#b1_5)">
<path d="M1428.7 1773.2C1432.5 1776.9 1442.2 1794.7 1451.3 1795.7C1460.3 1796.7 1481.5 1783.5 1482.8 1779.0C1484.2 1774.5 1467.8 1770.1 1459.4 1768.7C1451.0 1767.2 1436.8 1770.2 1432.3 1770.5" fill="none" stroke="rgb(128,128,128)" stroke-width="2.3" stroke-linecap="round" stroke-linejoin="round"/>
</g></g>
<g clip-path="url(#cBR)">
<g filter="url(#b2)">
<path d="M1603.7 1736.2C1606.7 1739.2 1614.2 1749.0 1621.7 1754.2C1629.2 1759.5 1644.2 1765.5 1648.7 1767.8" fill="none" stroke="rgb(128,128,128)" stroke-width="2.7" stroke-linecap="round" stroke-linejoin="round"/>
</g></g>
<g clip-path="url(#cTR)">
<g filter="url(#b40)">
<ellipse cx="1665.8" cy="715.3" rx="270.5" ry="117.2" fill="rgb(50,50,50)" fill-opacity="0.80"/>
</g></g>
<g clip-path="url(#cTR)">
<g filter="url(#b26)">
<path d="M1792.0 922.7C1852.2 901.6 2081.4 869.3 2139.2 904.6C2197.1 940.0 2193.3 1097.8 2139.2 1134.6C2085.1 1171.4 1874.7 1142.9 1814.6 1125.6C1754.5 1108.3 1782.3 1064.7 1778.5 1030.9C1774.8 997.1 1731.9 943.7 1792.0 922.7Z" fill="rgb(74,74,74)"/>
</g></g>
<g clip-path="url(#cTR)">
<g filter="url(#b12)">
<path d="M1278.0 1166.2C1305.1 1127.8 1390.8 1175.2 1440.4 1175.2C1490.0 1175.2 1533.5 1171.4 1575.6 1166.2C1617.7 1160.9 1655.3 1148.9 1692.9 1143.6C1730.4 1138.3 1760.5 1137.6 1801.1 1134.6C1841.6 1131.6 1890.5 1126.3 1936.3 1125.6C1982.2 1124.8 2052.8 1083.5 2076.1 1130.1C2099.4 1176.7 2209.1 1359.3 2076.1 1405.1C1943.1 1451.0 1411.0 1444.9 1278.0 1405.1C1145.0 1365.3 1251.0 1204.5 1278.0 1166.2Z" fill="rgb(50,50,50)"/>
</g></g>
<g clip-path="url(#cTR)">
<g filter="url(#b25)">
<path d="M1408.8 1161.6C1395.3 1150.4 1435.1 1120.3 1449.4 1098.5C1463.7 1076.7 1479.4 1049.7 1494.5 1030.9C1509.5 1012.1 1521.5 997.1 1539.5 985.8C1557.6 974.5 1581.6 966.3 1602.7 963.3C1623.7 960.2 1650.8 964.0 1665.8 967.8C1680.8 971.5 1680.8 975.3 1692.9 985.8C1704.9 996.3 1728.9 1012.1 1737.9 1030.9C1747.0 1049.7 1751.5 1079.7 1747.0 1098.5C1742.4 1117.3 1731.9 1133.8 1710.9 1143.6C1689.8 1153.4 1650.8 1153.4 1620.7 1157.1C1590.6 1160.9 1565.9 1165.4 1530.5 1166.2C1495.2 1166.9 1422.3 1172.9 1408.8 1161.6Z" fill="rgb(76,76,76)"/>
</g></g>
<g clip-path="url(#cTR)">
<g filter="url(#b14)">
<path d="M1431.3 1161.6C1417.1 1148.9 1450.9 1111.3 1462.9 1089.5C1474.9 1067.7 1489.2 1045.9 1503.5 1030.9C1517.8 1015.9 1536.5 1002.3 1548.6 999.3C1560.6 996.3 1574.9 1001.6 1575.6 1012.9C1576.4 1024.1 1557.6 1048.9 1553.1 1067.0C1548.6 1085.0 1549.3 1104.5 1548.6 1121.1C1547.8 1137.6 1568.1 1159.4 1548.6 1166.2C1529.0 1172.9 1445.6 1174.4 1431.3 1161.6Z" fill="rgb(107,107,107)"/>
</g></g>
<g clip-path="url(#cTR)">
<g filter="url(#b16)">
<ellipse cx="1494.5" cy="1139.1" rx="49.6" ry="31.6" fill="rgb(120,120,120)"/>
</g></g>
<g clip-path="url(#cTR)">
<g filter="url(#b5)">
<path d="M1557.6 1161.6C1544.4 1154.5 1550.8 1129.3 1550.8 1112.0C1550.8 1094.8 1551.9 1074.5 1557.6 1057.9C1563.2 1041.4 1572.6 1022.6 1584.6 1012.9C1596.7 1003.1 1613.9 999.3 1629.7 999.3C1645.5 999.3 1665.0 1005.3 1679.3 1012.9C1693.6 1020.4 1705.6 1032.4 1715.4 1044.4C1725.2 1056.4 1734.2 1071.5 1737.9 1085.0C1741.7 1098.5 1745.5 1115.8 1737.9 1125.6C1730.4 1135.3 1710.9 1138.7 1692.9 1143.6C1674.8 1148.5 1652.3 1151.9 1629.7 1154.9C1607.2 1157.9 1570.7 1168.8 1557.6 1161.6Z" fill="rgb(68,68,68)"/>
</g></g>
<g clip-path="url(#cTR)">
<g filter="url(#b8)">
<path d="M1548.6 949.7C1557.6 949.4 1586.1 947.1 1602.7 947.5C1619.2 947.8 1632.7 949.4 1647.8 952.0C1662.8 954.6 1685.3 961.4 1692.9 963.3" fill="none" stroke="rgb(107,107,107)" stroke-width="22.5" stroke-linecap="round" stroke-linejoin="round"/>
</g></g>
<g clip-path="url(#cTR)">
<g filter="url(#b4)">
<path d="M1611.7 954.2C1619.2 954.6 1644.0 954.1 1656.8 956.5C1669.6 958.9 1684.2 963.4 1688.3 968.7C1692.5 973.9 1682.0 980.7 1681.6 988.1C1681.2 995.4 1685.3 1008.7 1686.1 1012.9" fill="none" stroke="rgb(117,117,117)" stroke-width="9.9" stroke-linecap="round" stroke-linejoin="round"/>
</g></g>
<g clip-path="url(#cTR)">
<g filter="url(#b8)">
<path d="M1503.5 1166.2C1509.5 1143.6 1541.1 1136.1 1548.6 1166.2C1556.1 1196.2 1551.6 1312.7 1548.6 1346.5C1545.6 1380.3 1536.5 1376.6 1530.5 1369.0C1524.5 1361.5 1517.0 1335.2 1512.5 1301.4C1508.0 1267.6 1497.5 1188.7 1503.5 1166.2Z" fill="rgb(69,69,69)"/>
</g></g>
<g clip-path="url(#cTR)">
<g filter="url(#b10)">
<ellipse cx="1526.0" cy="1193.2" rx="20.3" ry="31.6" fill="rgb(84,84,84)"/>
</g></g>
<g clip-path="url(#cTR)">
<g filter="url(#b6)">
<path d="M1550.8 1170.7C1562.8 1147.0 1597.0 1163.1 1620.7 1159.4C1644.4 1155.6 1673.3 1147.0 1692.9 1148.1C1712.4 1149.2 1730.4 1148.1 1737.9 1166.2C1745.5 1184.2 1739.4 1226.3 1737.9 1256.3C1736.4 1286.4 1733.4 1321.7 1728.9 1346.5C1724.4 1371.3 1740.9 1395.4 1710.9 1405.1C1680.8 1414.9 1575.6 1422.4 1548.6 1405.1C1521.5 1387.8 1548.2 1340.5 1548.6 1301.4C1548.9 1262.3 1538.8 1194.3 1550.8 1170.7Z" fill="rgb(33,33,33)"/>
</g></g>
<g clip-path="url(#cTR)">
<g filter="url(#b14)">
<ellipse cx="1372.7" cy="1220.3" rx="40.6" ry="49.6" fill="rgb(32,32,32)"/>
</g></g>
<g clip-path="url(#cTR)">
<g filter="url(#b12)">
<ellipse cx="1471.9" cy="1247.3" rx="27.1" ry="54.1" fill="rgb(33,33,33)"/>
<ellipse cx="1453.9" cy="1346.5" rx="31.6" ry="40.6" fill="rgb(31,31,31)"/>
</g></g>
<g clip-path="url(#cTR)">
<g filter="url(#b16)">
<ellipse cx="1314.1" cy="1301.4" rx="36.1" ry="54.1" fill="rgb(51,51,51)"/>
</g></g>
<g clip-path="url(#cTR)">
<g filter="url(#b8)">
<ellipse cx="1417.8" cy="1211.2" rx="9.9" ry="40.6" fill="rgb(61,61,61)"/>
</g></g>
<g clip-path="url(#cTR)">
<g filter="url(#b12)">
<ellipse cx="1395.3" cy="1310.4" rx="22.5" ry="27.1" fill="rgb(54,54,54)"/>
</g></g>
<g clip-path="url(#cTR)">
<g filter="url(#b8)">
<path d="M1278.0 1346.5C1290.1 1349.5 1326.9 1357.8 1350.2 1364.5C1373.5 1371.3 1399.8 1379.6 1417.8 1387.1C1435.8 1394.6 1451.6 1405.9 1458.4 1409.6" fill="none" stroke="rgb(84,84,84)" stroke-width="18.0" stroke-linecap="round" stroke-linejoin="round"/>
</g></g>
<g clip-path="url(#cTR)">
<g filter="url(#b10)">
<path d="M1278.0 1310.4C1286.3 1312.7 1308.1 1317.9 1327.6 1324.0C1347.2 1330.0 1384.0 1342.7 1395.3 1346.5" fill="none" stroke="rgb(61,61,61)" stroke-width="18.0" stroke-linecap="round" stroke-linejoin="round"/>
<path d="M1801.1 1139.1C1817.6 1130.5 1861.2 1130.5 1891.2 1127.8C1921.3 1125.2 1950.6 1122.6 1981.4 1123.3C2012.2 1124.1 2060.3 1099.6 2076.1 1132.3C2091.9 1165.0 2091.9 1291.3 2076.1 1319.5C2060.3 1347.6 2012.2 1307.4 1981.4 1301.4C1950.6 1295.4 1917.5 1294.7 1891.2 1283.4C1864.9 1272.1 1840.1 1251.1 1823.6 1233.8C1807.1 1216.5 1795.8 1195.5 1792.0 1179.7C1788.3 1163.9 1784.5 1147.7 1801.1 1139.1Z" fill="rgb(38,38,38)"/>
</g></g>
<g clip-path="url(#cTR)">
<g filter="url(#b14)">
<ellipse cx="1963.4" cy="1098.5" rx="58.6" ry="27.1" fill="rgb(43,43,43)"/>
<path d="M1756.0 1220.3C1771.0 1194.0 1801.1 1235.3 1823.6 1247.3C1846.2 1259.3 1864.9 1280.4 1891.2 1292.4C1917.5 1304.4 1950.6 1311.9 1981.4 1319.5C2012.2 1327.0 2060.3 1323.2 2076.1 1337.5C2091.9 1351.8 2133.2 1393.8 2076.1 1405.1C2019.0 1416.4 1786.8 1435.9 1733.4 1405.1C1680.1 1374.3 1740.9 1246.6 1756.0 1220.3Z" fill="rgb(51,51,51)"/>
<ellipse cx="1846.2" cy="1355.5" rx="67.6" ry="27.1" fill="rgb(36,36,36)"/>
<ellipse cx="2004.0" cy="1373.6" rx="54.1" ry="22.5" fill="rgb(51,51,51)"/>
</g></g>
<g clip-path="url(#cTR)">
<g filter="url(#b3)">
<path d="M1796.6 1129.2C1804.8 1128.2 1826.6 1125.0 1846.2 1123.3C1865.7 1121.7 1891.2 1120.4 1913.8 1119.3C1936.3 1118.1 1954.4 1115.7 1981.4 1116.6C2008.5 1117.5 2060.3 1123.3 2076.1 1124.7" fill="none" stroke="rgb(84,84,84)" stroke-width="6.3" stroke-linecap="round" stroke-linejoin="round"/>
</g></g>
<g clip-path="url(#cTR)">
<g filter="url(#mot)">
<path d="M1278.0 1175.2C1305.1 1138.3 1390.8 1184.2 1440.4 1184.2C1490.0 1184.2 1533.5 1180.4 1575.6 1175.2C1617.7 1169.9 1655.3 1157.9 1692.9 1152.6C1730.4 1147.4 1760.5 1146.6 1801.1 1143.6C1841.6 1140.6 1890.5 1135.3 1936.3 1134.6C1982.2 1133.8 2052.8 1094.0 2076.1 1139.1C2099.4 1184.2 2209.1 1360.8 2076.1 1405.1C1943.1 1449.5 1411.0 1443.4 1278.0 1405.1C1145.0 1366.8 1251.0 1212.0 1278.0 1175.2Z" fill="#000" fill-opacity="0.40"/>
</g></g>
<g clip-path="url(#cTR)">
<g filter="url(#mot2)">
<path d="M1278.0 1175.2C1305.1 1138.3 1390.8 1184.2 1440.4 1184.2C1490.0 1184.2 1533.5 1180.4 1575.6 1175.2C1617.7 1169.9 1655.3 1157.9 1692.9 1152.6C1730.4 1147.4 1760.5 1146.6 1801.1 1143.6C1841.6 1140.6 1890.5 1135.3 1936.3 1134.6C1982.2 1133.8 2052.8 1094.0 2076.1 1139.1C2099.4 1184.2 2209.1 1360.8 2076.1 1405.1C1943.1 1449.5 1411.0 1443.4 1278.0 1405.1C1145.0 1366.8 1251.0 1212.0 1278.0 1175.2Z" fill="#000" fill-opacity="0.25"/>
</g></g>
<g clip-path="url(#cTR)">
<g filter="url(#mot)">
<path d="M1778.5 931.7C1828.9 913.7 2022.7 891.1 2071.6 922.7C2120.4 954.2 2116.7 1088.0 2071.6 1121.1C2026.5 1154.1 1851.4 1136.1 1801.1 1121.1C1750.7 1106.0 1773.3 1062.4 1769.5 1030.9C1765.7 999.3 1728.2 949.7 1778.5 931.7Z" fill="#000" fill-opacity="0.18"/>
</g></g>
<g clip-path="url(#cTR)">
<g filter="url(#b4)">
<path d="M1278.0 1123.3C1286.3 1126.3 1311.9 1135.7 1327.6 1141.4C1343.4 1147.0 1357.7 1153.0 1372.7 1157.1C1387.8 1161.3 1399.0 1163.9 1417.8 1166.2C1436.6 1168.4 1462.9 1170.7 1485.4 1170.7C1508.0 1170.7 1530.5 1169.0 1553.1 1166.2C1575.6 1163.3 1598.2 1158.0 1620.7 1153.5C1643.3 1149.0 1677.1 1141.5 1688.3 1139.1" fill="none" stroke="rgb(102,102,102)" stroke-width="11.7" stroke-linecap="round" stroke-linejoin="round"/>
</g></g>
<g clip-path="url(#cTR)">
<g filter="url(#b2_5)">
<path d="M1395.3 1163.9C1404.3 1164.9 1429.8 1168.6 1449.4 1169.8C1468.9 1170.9 1493.0 1171.6 1512.5 1170.7C1532.0 1169.8 1557.6 1165.4 1566.6 1164.3" fill="none" stroke="rgb(133,133,133)" stroke-width="6.3" stroke-linecap="round" stroke-linejoin="round"/>
</g></g>
<g clip-path="url(#cTR)">
<g filter="url(#b9)">
<path d="M1485.4 814.5C1484.7 819.0 1483.2 832.5 1480.9 841.5C1478.7 850.5 1477.2 861.8 1471.9 868.6C1466.7 875.3 1455.4 877.6 1449.4 882.1C1443.4 886.6 1437.3 889.6 1435.8 895.6C1434.3 901.6 1436.6 910.6 1440.4 918.2C1444.1 925.7 1455.4 937.0 1458.4 940.7" fill="none" stroke="rgb(92,92,92)" stroke-width="31.6" stroke-linecap="round" stroke-linejoin="round"/>
</g></g>
<g clip-path="url(#cTR)">
<g filter="url(#b6)">
<path d="M1480.9 823.5C1480.2 828.0 1479.1 842.3 1476.4 850.5C1473.8 858.8 1467.0 869.3 1465.2 873.1" fill="none" stroke="rgb(117,117,117)" stroke-width="18.0" stroke-linecap="round" stroke-linejoin="round"/>
</g></g>
<g clip-path="url(#cTR)">
<g filter="url(#b2_5)">
<path d="M1492.2 814.5C1496.0 811.2 1503.1 808.5 1512.5 808.1C1521.9 807.8 1538.0 810.7 1548.6 812.2C1559.1 813.7 1567.4 816.8 1575.6 817.2C1583.9 817.5 1592.5 811.9 1598.2 814.5C1603.9 817.0 1605.8 827.6 1609.9 832.5C1614.0 837.4 1617.4 842.3 1623.0 843.8C1628.5 845.3 1636.1 841.0 1643.3 841.5C1650.4 842.0 1654.5 844.5 1665.8 846.9C1677.1 849.3 1695.9 853.8 1710.9 855.9C1725.9 858.0 1740.9 861.6 1756.0 859.5C1771.0 857.5 1786.8 850.9 1801.1 843.8C1815.3 836.6 1830.4 828.7 1841.6 816.7C1852.9 804.7 1860.4 784.4 1868.7 771.6C1877.0 758.9 1881.5 747.6 1891.2 740.1C1901.0 732.5 1913.8 729.2 1927.3 726.5C1940.8 723.9 1970.9 722.0 1972.4 724.3C1973.9 726.5 1945.3 734.1 1936.3 740.1C1927.3 746.1 1910.8 757.0 1918.3 760.4C1925.8 763.7 1955.9 759.2 1981.4 760.4C2007.0 761.5 2056.6 757.7 2071.6 767.1C2086.6 776.5 2082.9 806.9 2071.6 816.7C2060.3 826.5 2022.7 820.1 2004.0 825.7C1985.2 831.4 1963.4 841.5 1958.9 850.5C1954.4 859.5 1984.4 876.5 1976.9 879.8C1969.4 883.2 1931.8 870.8 1913.8 870.8C1895.7 870.8 1880.0 875.3 1868.7 879.8C1857.4 884.3 1857.4 891.9 1846.2 897.9C1834.9 903.9 1816.1 911.4 1801.1 915.9C1786.0 920.4 1771.0 922.7 1756.0 924.9C1740.9 927.2 1725.9 927.4 1710.9 929.4C1695.9 931.5 1677.1 937.9 1665.8 937.1C1654.5 936.3 1650.8 924.9 1643.3 924.9C1635.7 924.9 1632.0 933.6 1620.7 937.1C1609.4 940.6 1590.6 945.3 1575.6 946.1C1560.6 946.9 1545.6 943.0 1530.5 942.1C1515.5 941.2 1496.7 943.0 1485.4 940.7C1474.2 938.4 1468.9 933.9 1462.9 928.1C1456.9 922.2 1453.0 911.7 1449.4 905.5C1445.8 899.4 1440.4 895.2 1441.3 891.1C1442.2 887.1 1448.8 884.3 1454.8 881.2C1460.8 878.0 1471.3 877.3 1477.3 872.2C1483.3 867.1 1488.7 857.9 1490.9 850.5C1493.0 843.2 1489.7 834.0 1490.0 828.0C1490.2 822.0 1488.4 817.8 1492.2 814.5Z" fill="rgb(30,30,30)"/>
</g></g>
<g clip-path="url(#cTR)">
<g filter="url(#b8)">
<path d="M1503.5 823.5C1520.0 816.3 1574.9 819.7 1593.7 825.7C1612.4 831.7 1611.7 844.9 1616.2 859.5C1620.7 874.2 1631.2 901.6 1620.7 913.7C1610.2 925.7 1575.6 929.4 1553.1 931.7C1530.5 933.9 1500.5 931.7 1485.4 927.2C1470.4 922.7 1461.4 914.4 1462.9 904.6C1464.4 894.9 1487.7 882.1 1494.5 868.6C1501.2 855.0 1486.9 830.6 1503.5 823.5Z" fill="rgb(24,24,24)"/>
</g></g>
<g clip-path="url(#cTR)">
<g filter="url(#b10)">
<path d="M1656.8 859.5C1671.8 852.0 1725.9 876.1 1756.0 873.1C1786.0 870.1 1816.1 857.3 1837.1 841.5C1858.2 825.7 1865.7 790.4 1882.2 778.4C1898.8 766.4 1906.3 769.4 1936.3 769.4C1966.4 769.4 2041.5 772.4 2062.6 778.4C2083.6 784.4 2079.1 797.9 2062.6 805.4C2046.0 813.0 1985.9 814.5 1963.4 823.5C1940.8 832.5 1946.8 849.0 1927.3 859.5C1907.8 870.1 1874.7 877.6 1846.2 886.6C1817.6 895.6 1786.0 908.4 1756.0 913.7C1725.9 918.9 1682.3 927.2 1665.8 918.2C1649.3 909.1 1641.7 867.1 1656.8 859.5Z" fill="rgb(26,26,26)"/>
</g></g>
<g clip-path="url(#cTR)">
<g filter="url(#b8)">
<ellipse cx="1792.0" cy="891.1" rx="54.1" ry="11.3" fill="rgb(36,36,36)" transform="rotate(-15.0 1792.0 891.1)"/>
</g></g>
<g clip-path="url(#cTR)">
<g filter="url(#b10)">
<ellipse cx="1963.4" cy="850.5" rx="27.1" ry="18.0" fill="rgb(38,38,38)"/>
</g></g>
<g clip-path="url(#cTR)">
<g filter="url(#b16)">
<path d="M1846.2 895.6C1846.2 887.4 1906.3 877.6 1936.3 873.1C1966.4 868.6 2004.0 872.3 2026.5 868.6C2049.0 864.8 2064.1 846.0 2071.6 850.5C2079.1 855.0 2094.1 883.6 2071.6 895.6C2049.0 907.6 1973.9 922.7 1936.3 922.7C1898.8 922.7 1846.2 903.9 1846.2 895.6Z" fill="rgb(51,51,51)" fill-opacity="0.80"/>
</g></g>
<g clip-path="url(#cTR)">
<g filter="url(#b1_5)">
<path d="M1494.5 812.2C1493.9 815.6 1491.6 825.7 1490.9 832.5C1490.1 839.3 1492.2 846.0 1490.0 852.8C1487.7 859.5 1482.6 868.3 1477.3 873.1C1472.1 877.8 1461.5 879.8 1458.4 881.2" fill="none" stroke="rgb(158,158,158)" stroke-width="4.1" stroke-linecap="round" stroke-linejoin="round"/>
</g></g>
<g clip-path="url(#cTR)">
<g filter="url(#b1_2)">
<path d="M1442.2 888.9C1442.8 891.1 1443.8 897.5 1445.8 902.4C1447.7 907.3 1450.1 912.9 1453.9 918.2C1457.6 923.4 1463.0 930.2 1468.3 933.9C1473.6 937.7 1482.6 939.6 1485.4 940.7" fill="none" stroke="rgb(242,242,242)" stroke-width="3.6" stroke-linecap="round" stroke-linejoin="round"/>
</g></g>
<g clip-path="url(#cTR)">
<g filter="url(#b2)">
<path d="M1485.4 940.7C1493.0 941.2 1515.5 942.4 1530.5 943.4C1545.6 944.5 1568.1 946.4 1575.6 947.0" fill="none" stroke="rgb(107,107,107)" stroke-width="3.6" stroke-linecap="round" stroke-linejoin="round"/>
<path d="M1494.5 810.9C1500.5 810.4 1517.0 807.2 1530.5 808.1C1544.1 809.0 1568.1 814.9 1575.6 816.3" fill="none" stroke="rgb(92,92,92)" stroke-width="3.2" stroke-linecap="round" stroke-linejoin="round"/>
<path d="M1792.0 846.0C1797.3 842.9 1814.6 833.8 1823.6 827.1C1832.6 820.3 1839.4 814.3 1846.2 805.4C1852.9 796.6 1859.5 783.3 1864.2 773.9C1868.8 764.5 1869.6 755.5 1874.1 749.1C1878.6 742.7 1883.1 739.5 1891.2 735.6C1899.4 731.6 1917.5 726.9 1922.8 725.2" fill="none" stroke="rgb(128,128,128)" stroke-width="5.4" stroke-linecap="round" stroke-linejoin="round"/>
</g></g>
<g clip-path="url(#cTR)">
<g filter="url(#b3)">
<path d="M1756.0 857.3 L1792.0 846.9" fill="none" stroke="rgb(92,92,92)" stroke-width="4.5" stroke-linecap="round" stroke-linejoin="round"/>
</g></g>
<g clip-path="url(#cTR)">
<g filter="url(#mot2)">
<path d="M1492.2 814.5C1496.0 811.2 1503.1 808.5 1512.5 808.1C1521.9 807.8 1538.0 810.7 1548.6 812.2C1559.1 813.7 1567.4 816.8 1575.6 817.2C1583.9 817.5 1592.5 811.9 1598.2 814.5C1603.9 817.0 1605.8 827.6 1609.9 832.5C1614.0 837.4 1617.4 842.3 1623.0 843.8C1628.5 845.3 1636.1 841.0 1643.3 841.5C1650.4 842.0 1654.5 844.5 1665.8 846.9C1677.1 849.3 1695.9 853.8 1710.9 855.9C1725.9 858.0 1740.9 861.6 1756.0 859.5C1771.0 857.5 1786.8 850.9 1801.1 843.8C1815.3 836.6 1830.4 828.7 1841.6 816.7C1852.9 804.7 1860.4 784.4 1868.7 771.6C1877.0 758.9 1881.5 747.6 1891.2 740.1C1901.0 732.5 1913.8 729.2 1927.3 726.5C1940.8 723.9 1970.9 722.0 1972.4 724.3C1973.9 726.5 1945.3 734.1 1936.3 740.1C1927.3 746.1 1910.8 757.0 1918.3 760.4C1925.8 763.7 1955.9 759.2 1981.4 760.4C2007.0 761.5 2056.6 757.7 2071.6 767.1C2086.6 776.5 2082.9 806.9 2071.6 816.7C2060.3 826.5 2022.7 820.1 2004.0 825.7C1985.2 831.4 1963.4 841.5 1958.9 850.5C1954.4 859.5 1984.4 876.5 1976.9 879.8C1969.4 883.2 1931.8 870.8 1913.8 870.8C1895.7 870.8 1880.0 875.3 1868.7 879.8C1857.4 884.3 1857.4 891.9 1846.2 897.9C1834.9 903.9 1816.1 911.4 1801.1 915.9C1786.0 920.4 1771.0 922.7 1756.0 924.9C1740.9 927.2 1725.9 927.4 1710.9 929.4C1695.9 931.5 1677.1 937.9 1665.8 937.1C1654.5 936.3 1650.8 924.9 1643.3 924.9C1635.7 924.9 1632.0 933.6 1620.7 937.1C1609.4 940.6 1590.6 945.3 1575.6 946.1C1560.6 946.9 1545.6 943.0 1530.5 942.1C1515.5 941.2 1496.7 943.0 1485.4 940.7C1474.2 938.4 1468.9 933.9 1462.9 928.1C1456.9 922.2 1453.0 911.7 1449.4 905.5C1445.8 899.4 1440.4 895.2 1441.3 891.1C1442.2 887.1 1448.8 884.3 1454.8 881.2C1460.8 878.0 1471.3 877.3 1477.3 872.2C1483.3 867.1 1488.7 857.9 1490.9 850.5C1493.0 843.2 1489.7 834.0 1490.0 828.0C1490.2 822.0 1488.4 817.8 1492.2 814.5Z" fill="#000" fill-opacity="0.25"/>
</g></g>
<g clip-path="url(#cTR)">
<g filter="url(#b7)">
<path d="M1967.9 945.2C1971.3 940.0 1980.7 937.0 1990.4 936.2C2000.2 935.4 2013.7 940.7 2026.5 940.7C2039.3 940.7 2059.6 932.4 2067.1 936.2C2074.6 940.0 2078.4 957.2 2071.6 963.3C2064.8 969.3 2040.0 969.3 2026.5 972.3C2013.0 975.3 1999.8 982.0 1990.4 981.3C1981.0 980.5 1973.9 973.8 1970.1 967.8C1966.4 961.7 1964.5 950.5 1967.9 945.2Z" fill="rgb(33,33,33)"/>
</g></g>
<g clip-path="url(#cTR)">
<g filter="url(#b3_5)">
<path d="M1692.9 973.2C1697.1 971.5 1704.1 974.7 1710.9 976.8C1717.6 978.9 1725.9 982.4 1733.4 985.8C1740.9 989.2 1749.2 990.3 1756.0 997.1C1762.7 1003.8 1770.3 1017.0 1774.0 1026.4C1777.8 1035.8 1775.5 1045.2 1778.5 1053.4C1781.5 1061.7 1788.3 1068.5 1792.0 1076.0C1795.8 1083.5 1800.3 1091.0 1801.1 1098.5C1801.8 1106.0 1798.8 1113.5 1796.6 1121.1C1794.3 1128.6 1789.8 1136.1 1787.5 1143.6C1785.3 1151.1 1784.5 1158.6 1783.0 1166.2C1781.5 1173.7 1780.0 1181.2 1778.5 1188.7C1777.0 1196.2 1777.8 1206.6 1774.0 1211.2C1770.3 1215.9 1761.1 1216.7 1756.0 1216.7C1750.9 1216.7 1746.2 1215.9 1743.3 1211.2C1740.5 1206.6 1739.6 1196.2 1738.8 1188.7C1738.1 1181.2 1738.1 1173.7 1738.8 1166.2C1739.6 1158.6 1741.8 1151.1 1743.3 1143.6C1744.9 1136.1 1746.7 1128.6 1747.9 1121.1C1749.0 1113.5 1750.1 1106.0 1750.1 1098.5C1750.1 1091.0 1749.7 1082.6 1747.9 1076.0C1746.0 1069.4 1743.3 1063.2 1738.8 1058.8C1734.3 1054.5 1726.8 1052.2 1720.8 1049.8C1714.8 1047.4 1708.0 1048.3 1702.8 1044.4C1697.5 1040.5 1690.7 1033.1 1689.2 1026.4C1687.7 1019.6 1694.4 1010.4 1693.8 1003.8C1693.2 997.2 1685.8 991.8 1685.6 986.7C1685.5 981.6 1688.6 974.8 1692.9 973.2Z" fill="rgb(32,32,32)"/>
</g></g>
<g clip-path="url(#cTR)">
<g filter="url(#b6)">
<path d="M1706.4 985.8C1715.0 985.0 1741.7 993.3 1751.5 1003.8C1761.2 1014.4 1767.2 1041.4 1765.0 1048.9C1762.7 1056.4 1747.7 1051.2 1737.9 1048.9C1728.2 1046.7 1712.8 1042.2 1706.4 1035.4C1700.0 1028.6 1699.6 1016.6 1699.6 1008.3C1699.6 1000.1 1697.7 986.5 1706.4 985.8Z" fill="rgb(26,26,26)"/>
</g></g>
<g clip-path="url(#cTR)">
<g filter="url(#b2)">
<path d="M1684.7 968.7C1686.1 971.7 1692.7 980.7 1692.9 986.7C1693.0 992.7 1686.2 998.1 1685.6 1004.7C1685.0 1011.3 1685.8 1019.5 1689.2 1026.4C1692.7 1033.3 1699.0 1041.6 1706.4 1046.2C1713.7 1050.9 1726.8 1049.4 1733.4 1054.3C1740.0 1059.3 1743.5 1064.9 1746.1 1076.0C1748.6 1087.1 1749.8 1106.0 1748.8 1121.1C1747.7 1136.1 1741.4 1151.7 1739.7 1166.2C1738.1 1180.6 1739.0 1200.7 1738.8 1207.6" fill="none" stroke="rgb(107,107,107)" stroke-width="4.1" stroke-linecap="round" stroke-linejoin="round"/>
</g></g>
<g clip-path="url(#cTR)">
<g filter="url(#b1_5)">
<path d="M1685.6 1004.7C1686.2 1008.3 1685.8 1019.5 1689.2 1026.4C1692.7 1033.3 1703.5 1042.9 1706.4 1046.2" fill="none" stroke="rgb(140,140,140)" stroke-width="3.2" stroke-linecap="round" stroke-linejoin="round"/>
</g></g>
<g clip-path="url(#cPC)">
<g>
<rect x="920.0" y="1030.0" width="370.0" height="372.0" fill="rgb(34,34,34)"/>
</g></g>
<g clip-path="url(#cPC)">
<g filter="url(#b10)">
<path d="M1202.4 1332.4C1212.7 1331.1 1235.3 1349.0 1249.1 1355.7C1262.8 1362.5 1278.9 1365.8 1284.9 1372.8C1290.8 1379.8 1293.4 1393.6 1284.9 1397.7C1276.3 1401.9 1249.8 1403.4 1233.5 1397.7C1217.1 1392.0 1192.0 1374.4 1186.8 1363.5C1181.6 1352.6 1192.0 1333.7 1202.4 1332.4Z" fill="rgb(48,48,48)"/>
</g></g>
<g clip-path="url(#cPC)">
<g filter="url(#b7)">
<path d="M1059.2 1217.2C1061.2 1206.5 1066.4 1189.4 1074.7 1181.4C1083.0 1173.3 1095.5 1173.1 1109.0 1168.9C1122.5 1164.8 1140.1 1162.2 1155.7 1156.5C1171.2 1150.8 1189.4 1142.2 1202.4 1134.7C1215.3 1127.1 1219.7 1115.5 1233.5 1111.3C1247.2 1107.2 1276.3 1068.3 1284.9 1109.8C1293.4 1151.3 1290.8 1321.5 1284.9 1360.4C1278.9 1399.3 1261.5 1350.0 1249.1 1343.3C1236.6 1336.5 1224.4 1327.4 1210.1 1319.9C1195.9 1312.4 1178.8 1303.8 1163.4 1298.1C1148.1 1292.4 1131.5 1291.4 1118.3 1285.7C1105.1 1280.0 1093.4 1270.6 1084.1 1263.9C1074.7 1257.1 1066.4 1253.0 1062.3 1245.2C1058.1 1237.4 1057.1 1227.8 1059.2 1217.2Z" fill="rgb(55,55,55)"/>
</g></g>
<g clip-path="url(#cPC)">
<g filter="url(#b12)">
<ellipse cx="1202.4" cy="1248.3" rx="17.1" ry="18.7" fill="rgb(29,29,29)"/>
</g></g>
<g clip-path="url(#cPC)">
<g filter="url(#b8)">
<ellipse cx="1147.9" cy="1168.9" rx="10.9" ry="7.8" fill="rgb(36,36,36)"/>
<ellipse cx="1124.5" cy="1217.2" rx="9.3" ry="7.8" fill="rgb(38,38,38)"/>
</g></g>
<g clip-path="url(#cPC)">
<g filter="url(#b20)">
<ellipse cx="1249.1" cy="1207.8" rx="23.3" ry="31.1" fill="rgb(43,43,43)"/>
</g></g>
<g clip-path="url(#cPC)">
<g filter="url(#b14)">
<ellipse cx="1233.5" cy="1145.6" rx="31.1" ry="15.6" fill="rgb(41,41,41)"/>
</g></g>
<g clip-path="url(#cPC)">
<g filter="url(#b12)">
<ellipse cx="1118.3" cy="1248.3" rx="20.2" ry="17.1" fill="rgb(71,71,71)"/>
</g></g>
<g clip-path="url(#cPC)">
<g filter="url(#b10)">
<ellipse cx="1217.9" cy="1291.9" rx="14.0" ry="9.3" fill="rgb(82,82,82)"/>
<ellipse cx="1155.7" cy="1279.4" rx="24.9" ry="7.8" fill="rgb(76,76,76)" transform="rotate(15.0 1155.7 1279.4)"/>
</g></g>
<g clip-path="url(#cPC)">
<g filter="url(#mot2)">
<path d="M1059.2 1217.2C1061.2 1206.5 1066.4 1189.4 1074.7 1181.4C1083.0 1173.3 1095.5 1173.1 1109.0 1168.9C1122.5 1164.8 1140.1 1162.2 1155.7 1156.5C1171.2 1150.8 1189.4 1142.2 1202.4 1134.7C1215.3 1127.1 1219.7 1115.5 1233.5 1111.3C1247.2 1107.2 1276.3 1068.3 1284.9 1109.8C1293.4 1151.3 1290.8 1321.5 1284.9 1360.4C1278.9 1399.3 1261.5 1350.0 1249.1 1343.3C1236.6 1336.5 1224.4 1327.4 1210.1 1319.9C1195.9 1312.4 1178.8 1303.8 1163.4 1298.1C1148.1 1292.4 1131.5 1291.4 1118.3 1285.7C1105.1 1280.0 1093.4 1270.6 1084.1 1263.9C1074.7 1257.1 1066.4 1253.0 1062.3 1245.2C1058.1 1237.4 1057.1 1227.8 1059.2 1217.2Z" fill="#000" fill-opacity="0.50"/>
</g></g>
<g clip-path="url(#cPC)">
<g filter="url(#b2_5)">
<ellipse cx="1171.2" cy="1251.4" rx="14.8" ry="17.1" fill="none" stroke="rgb(92,92,92)" stroke-width="7"/>
</g></g>
<g clip-path="url(#cPC)">
<g filter="url(#b2)">
<ellipse cx="1174.3" cy="1265.4" rx="4.4" ry="3.4" fill="rgb(166,166,166)"/>
</g></g>
<g clip-path="url(#cPC)">
<g filter="url(#b9)">
<ellipse cx="1059.2" cy="1210.9" rx="31.1" ry="51.4" fill="rgb(76,76,76)" transform="rotate(-8.0 1059.2 1210.9)"/>
</g></g>
<g clip-path="url(#cPC)">
<g filter="url(#b7)">
<ellipse cx="1065.4" cy="1263.9" rx="18.7" ry="12.5" fill="rgb(107,107,107)"/>
</g></g>
<g clip-path="url(#cPC)">
<g filter="url(#b3_5)">
<path d="M1081.7 1175.1C1083.7 1175.4 1089.9 1177.0 1093.4 1176.7C1096.9 1176.4 1100.1 1175.1 1102.7 1173.6C1105.3 1172.0 1107.3 1169.7 1109.0 1167.4C1110.7 1165.0 1110.8 1161.4 1112.9 1159.6C1114.9 1157.8 1116.9 1157.2 1121.4 1156.5C1126.0 1155.7 1134.4 1155.4 1140.1 1154.9C1145.8 1154.4 1150.5 1154.6 1155.7 1153.3C1160.9 1152.1 1166.0 1149.5 1171.2 1147.1C1176.4 1144.8 1181.6 1141.9 1186.8 1139.3C1192.0 1136.7 1197.2 1134.7 1202.4 1131.6C1207.6 1128.4 1212.7 1123.9 1217.9 1120.7C1223.1 1117.4 1228.3 1113.1 1233.5 1112.1C1238.7 1111.1 1240.5 1113.9 1249.1 1114.4C1257.6 1115.0 1278.9 1115.1 1284.9 1115.2" fill="none" stroke="rgb(107,107,107)" stroke-width="7.8" stroke-linecap="round" stroke-linejoin="round"/>
</g></g>
<g clip-path="url(#cPC)">
<g filter="url(#b1_5)">
<path d="M1081.7 1175.1C1083.7 1175.4 1089.9 1177.0 1093.4 1176.7C1096.9 1176.4 1100.1 1175.1 1102.7 1173.6C1105.3 1172.0 1107.3 1169.7 1109.0 1167.4C1110.7 1165.0 1110.8 1161.4 1112.9 1159.6C1114.9 1157.8 1116.9 1157.2 1121.4 1156.5C1126.0 1155.7 1134.4 1155.4 1140.1 1154.9C1145.8 1154.4 1150.5 1154.6 1155.7 1153.3C1160.9 1152.1 1166.0 1149.5 1171.2 1147.1C1176.4 1144.8 1181.6 1141.9 1186.8 1139.3C1192.0 1136.7 1199.8 1132.9 1202.4 1131.6" fill="none" stroke="rgb(173,173,173)" stroke-width="2.5" stroke-linecap="round" stroke-linejoin="round"/>
</g></g>
<g clip-path="url(#cPC)">
<g filter="url(#b1_8)">
<path d="M1202.4 1131.6C1205.0 1129.7 1212.7 1123.9 1217.9 1120.7C1223.1 1117.4 1228.3 1113.1 1233.5 1112.1C1238.7 1111.1 1240.5 1113.9 1249.1 1114.4C1257.6 1115.0 1278.9 1115.1 1284.9 1115.2" fill="none" stroke="rgb(128,128,128)" stroke-width="2.2" stroke-linecap="round" stroke-linejoin="round"/>
</g></g>
<g clip-path="url(#cPC)">
<g filter="url(#b1_2)">
<path d="M1084.1 1181.4C1085.6 1180.7 1090.3 1178.7 1093.4 1177.5C1096.5 1176.2 1100.0 1175.7 1102.7 1173.9C1105.5 1172.1 1108.1 1169.0 1109.7 1166.6C1111.4 1164.2 1112.3 1160.7 1112.9 1159.6" fill="none" stroke="rgb(250,250,250)" stroke-width="2.2" stroke-linecap="round" stroke-linejoin="round"/>
</g></g>
<g clip-path="url(#cPC)">
<g filter="url(#b4)">
<path d="M1058.4 1239.0C1059.5 1240.8 1062.7 1246.7 1065.4 1249.9C1068.1 1253.0 1071.6 1255.3 1074.7 1257.6C1077.8 1260.0 1080.9 1261.5 1084.1 1263.9C1087.2 1266.2 1089.8 1269.1 1093.4 1271.7C1097.0 1274.2 1101.7 1277.1 1105.9 1279.4C1110.0 1281.8 1113.9 1283.6 1118.3 1285.7C1122.7 1287.7 1127.4 1290.3 1132.3 1291.9C1137.2 1293.4 1142.7 1294.0 1147.9 1295.0C1153.1 1296.0 1158.3 1296.6 1163.4 1298.1C1168.6 1299.7 1173.8 1302.0 1179.0 1304.3C1184.2 1306.7 1189.4 1309.5 1194.6 1312.1C1199.8 1314.7 1206.3 1317.8 1210.1 1319.9C1214.0 1322.0 1214.0 1322.0 1217.9 1324.6C1221.8 1327.2 1228.3 1332.1 1233.5 1335.5C1238.7 1338.8 1243.9 1342.0 1249.1 1344.8C1254.2 1347.7 1258.7 1349.6 1264.6 1352.6C1270.6 1355.6 1281.5 1361.0 1284.9 1362.7" fill="none" stroke="rgb(107,107,107)" stroke-width="11.7" stroke-linecap="round" stroke-linejoin="round"/>
</g></g>
<g clip-path="url(#cPC)">
<g filter="url(#b1_8)">
<path d="M1058.4 1239.0C1059.5 1240.8 1062.7 1246.7 1065.4 1249.9C1068.1 1253.0 1071.6 1255.3 1074.7 1257.6C1077.8 1260.0 1080.9 1261.5 1084.1 1263.9C1087.2 1266.2 1089.8 1269.1 1093.4 1271.7C1097.0 1274.2 1101.7 1277.1 1105.9 1279.4C1110.0 1281.8 1113.9 1283.6 1118.3 1285.7C1122.7 1287.7 1127.4 1290.3 1132.3 1291.9C1137.2 1293.4 1142.7 1294.0 1147.9 1295.0C1153.1 1296.0 1158.3 1296.6 1163.4 1298.1C1168.6 1299.7 1173.8 1302.0 1179.0 1304.3C1184.2 1306.7 1189.4 1309.5 1194.6 1312.1C1199.8 1314.7 1206.3 1317.8 1210.1 1319.9C1214.0 1322.0 1214.0 1322.0 1217.9 1324.6C1221.8 1327.2 1228.3 1332.1 1233.5 1335.5C1238.7 1338.8 1243.9 1342.0 1249.1 1344.8C1254.2 1347.7 1258.7 1349.6 1264.6 1352.6C1270.6 1355.6 1281.5 1361.0 1284.9 1362.7" fill="none" stroke="rgb(168,168,168)" stroke-width="3.7" stroke-linecap="round" stroke-linejoin="round"/>
</g></g>
<g clip-path="url(#cPC)">
<g filter="url(#b1_3)">
<path d="M1058.4 1239.0C1059.5 1240.8 1062.7 1246.7 1065.4 1249.9C1068.1 1253.0 1071.6 1255.3 1074.7 1257.6C1077.8 1260.0 1080.9 1261.5 1084.1 1263.9C1087.2 1266.2 1089.8 1269.1 1093.4 1271.7C1097.0 1274.2 1103.8 1278.1 1105.9 1279.4" fill="none" stroke="rgb(250,250,250)" stroke-width="2.5" stroke-linecap="round" stroke-linejoin="round"/>
</g></g>
<g clip-path="url(#cPC)">
<g filter="url(#b1_5)">
<path d="M1208.6 1318.7C1210.1 1319.6 1215.3 1322.9 1217.9 1324.6C1220.5 1326.2 1223.1 1327.8 1224.2 1328.5" fill="none" stroke="rgb(242,242,242)" stroke-width="2.2" stroke-linecap="round" stroke-linejoin="round"/>
</g></g>
<g clip-path="url(#cPC)">
<g filter="url(#b3_5)">
<path d="M1045.9 1174.4C1047.9 1174.1 1048.6 1180.5 1051.4 1181.4C1054.1 1182.3 1058.4 1180.8 1062.3 1179.8C1066.2 1178.8 1071.5 1175.9 1074.7 1175.1C1078.0 1174.4 1081.2 1173.8 1081.7 1175.1C1082.2 1176.4 1079.8 1180.1 1077.8 1182.9C1075.9 1185.8 1071.9 1188.9 1070.0 1192.3C1068.2 1195.6 1068.2 1200.0 1066.9 1203.2C1065.6 1206.3 1063.8 1208.6 1062.3 1210.9C1060.7 1213.3 1058.1 1214.6 1057.6 1217.2C1057.1 1219.8 1059.0 1222.9 1059.2 1226.5C1059.3 1230.1 1059.2 1236.4 1058.4 1239.0C1057.6 1241.6 1055.9 1243.1 1054.5 1242.1C1053.1 1241.0 1051.1 1236.9 1049.8 1232.7C1048.5 1228.6 1047.7 1222.1 1046.7 1217.2C1045.7 1212.2 1044.5 1207.3 1043.6 1203.2C1042.7 1199.0 1041.9 1195.6 1041.3 1192.3C1040.6 1188.9 1038.9 1185.9 1039.7 1182.9C1040.5 1179.9 1044.0 1174.6 1045.9 1174.4Z" fill="rgb(178,178,178)"/>
</g></g>
<g clip-path="url(#cPC)">
<g filter="url(#b1_2)">
<path d="M1045.9 1174.4C1047.9 1174.1 1048.6 1180.5 1051.4 1181.4C1054.1 1182.3 1058.4 1180.8 1062.3 1179.8C1066.2 1178.8 1071.5 1175.9 1074.7 1175.1C1078.0 1174.4 1081.2 1173.8 1081.7 1175.1C1082.2 1176.4 1079.8 1180.1 1077.8 1182.9C1075.9 1185.8 1071.9 1188.9 1070.0 1192.3C1068.2 1195.6 1068.2 1200.0 1066.9 1203.2C1065.6 1206.3 1063.8 1208.6 1062.3 1210.9C1060.7 1213.3 1058.1 1214.6 1057.6 1217.2C1057.1 1219.8 1059.0 1222.9 1059.2 1226.5C1059.3 1230.1 1059.2 1236.4 1058.4 1239.0C1057.6 1241.6 1055.9 1243.1 1054.5 1242.1C1053.1 1241.0 1051.1 1236.9 1049.8 1232.7C1048.5 1228.6 1047.7 1222.1 1046.7 1217.2C1045.7 1212.2 1044.5 1207.3 1043.6 1203.2C1042.7 1199.0 1041.9 1195.6 1041.3 1192.3C1040.6 1188.9 1038.9 1185.9 1039.7 1182.9C1040.5 1179.9 1044.0 1174.6 1045.9 1174.4Z" fill="rgb(255,255,255)"/>
</g></g>
<g clip-path="url(#cPC)">
<g filter="url(#spk)">
<rect x="926" y="1033" width="358" height="365" fill="#000" fill-opacity="0.6"/>
</g></g>
<g clip-path="url(#chips)">
<g>
<circle cx="1400.7" cy="787.0" r="11.8" fill="url(#sh)" opacity="0.8"/>
<rect x="1397.0" y="783.0" width="8.1" height="8.1" fill="rgb(255,255,255)"/>
<circle cx="1505.7" cy="631.0" r="5.3" fill="url(#sh)" opacity="0.8"/>
<rect x="1504.0" y="629.0" width="3.7" height="3.7" fill="rgb(255,255,255)"/>
<circle cx="1648.7" cy="657.1" r="4.1" fill="url(#sh)" opacity="0.8"/>
<rect x="1647.0" y="656.0" width="2.8" height="2.8" fill="rgb(255,255,255)"/>
<circle cx="1366.0" cy="686.4" r="5.3" fill="url(#sh)" opacity="0.8"/>
<rect x="1364.0" y="685.0" width="3.7" height="3.7" fill="rgb(255,255,255)"/>
<circle cx="1898.0" cy="707.6" r="3.7" fill="url(#sh)" opacity="0.5"/>
<rect x="1897.0" y="706.0" width="2.4" height="2.4" fill="rgb(255,255,255)"/>
<circle cx="1627.0" cy="882.5" r="6.5" fill="url(#sh)" opacity="0.8"/>
<rect x="1625.0" y="880.0" width="4.5" height="4.5" fill="rgb(255,255,255)"/>
<circle cx="1620.3" cy="862.7" r="3.0" fill="url(#sh)" opacity="0.5"/>
<rect x="1619.0" y="862.0" width="2.0" height="2.0" fill="rgb(255,255,255)"/>
<circle cx="1381.7" cy="1058.8" r="4.7" fill="url(#sh)" opacity="0.8"/>
<rect x="1380.0" y="1057.0" width="3.2" height="3.2" fill="rgb(255,255,255)"/>
<circle cx="1394.8" cy="1149.9" r="5.9" fill="url(#sh)" opacity="0.8"/>
<rect x="1393.0" y="1148.0" width="4.1" height="4.1" fill="rgb(255,255,255)"/>
<circle cx="1381.7" cy="1158.0" r="2.4" fill="url(#sh)" opacity="0.5"/>
<rect x="1381.0" y="1157.0" width="1.6" height="1.6" fill="rgb(204,204,204)"/>
<circle cx="1831.3" cy="1198.6" r="8.2" fill="url(#sh)" opacity="0.8"/>
<rect x="1828.0" y="1196.0" width="5.7" height="5.7" fill="rgb(255,255,255)"/>
<circle cx="2052.7" cy="1191.9" r="9.4" fill="url(#sh)" opacity="0.8"/>
<rect x="2049.0" y="1189.0" width="6.5" height="6.5" fill="rgb(255,255,255)"/>
<circle cx="1648.2" cy="1332.5" r="8.2" fill="url(#sh)" opacity="0.8"/>
<rect x="1645.0" y="1330.0" width="5.7" height="5.7" fill="rgb(255,255,255)"/>
<circle cx="1759.1" cy="1349.7" r="5.3" fill="url(#sh)" opacity="0.8"/>
<rect x="1757.0" y="1348.0" width="3.7" height="3.7" fill="rgb(255,255,255)"/>
<circle cx="1343.9" cy="1295.1" r="5.3" fill="url(#sh)" opacity="0.8"/>
<rect x="1342.0" y="1293.0" width="3.7" height="3.7" fill="rgb(255,255,255)"/>
<circle cx="1417.8" cy="1219.4" r="3.7" fill="url(#sh)" opacity="0.5"/>
<rect x="1417.0" y="1218.0" width="2.4" height="2.4" fill="rgb(255,255,255)"/>
<circle cx="1827.2" cy="1099.4" r="4.1" fill="url(#sh)" opacity="0.8"/>
<rect x="1826.0" y="1098.0" width="2.8" height="2.8" fill="rgb(255,255,255)"/>
<circle cx="1812.3" cy="1091.8" r="3.0" fill="url(#sh)" opacity="0.5"/>
<rect x="1811.0" y="1091.0" width="2.0" height="2.0" fill="rgb(255,255,255)"/>
<circle cx="1586.9" cy="1230.6" r="2.4" fill="url(#sh)" opacity="0.5"/>
<rect x="1586.0" y="1230.0" width="1.6" height="1.6" fill="rgb(204,204,204)"/>
<circle cx="1856.1" cy="1078.7" r="2.4" fill="url(#sh)" opacity="0.5"/>
<rect x="1855.0" y="1078.0" width="1.6" height="1.6" fill="rgb(204,204,204)"/>
<circle cx="1864.2" cy="1032.2" r="2.4" fill="url(#sh)" opacity="0.5"/>
<rect x="1863.0" y="1031.0" width="1.6" height="1.6" fill="rgb(204,204,204)"/>
<circle cx="1747.0" cy="790.1" r="2.4" fill="url(#sh)" opacity="0.5"/>
<rect x="1746.0" y="789.0" width="1.6" height="1.6" fill="rgb(204,204,204)"/>
<circle cx="2049.5" cy="808.6" r="2.4" fill="url(#sh)" opacity="0.5"/>
<rect x="2049.0" y="808.0" width="1.6" height="1.6" fill="rgb(204,204,204)"/>
<circle cx="1953.5" cy="669.3" r="3.0" fill="url(#sh)" opacity="0.5"/>
<rect x="1952.0" y="668.0" width="2.0" height="2.0" fill="rgb(255,255,255)"/>
<circle cx="1550.8" cy="684.6" r="2.4" fill="url(#sh)" opacity="0.5"/>
<rect x="1550.0" y="684.0" width="1.6" height="1.6" fill="rgb(204,204,204)"/>
<circle cx="1307.3" cy="740.1" r="2.4" fill="url(#sh)" opacity="0.5"/>
<rect x="1307.0" y="739.0" width="1.6" height="1.6" fill="rgb(204,204,204)"/>
<circle cx="1287.1" cy="741.0" r="2.4" fill="url(#sh)" opacity="0.5"/>
<rect x="1286.0" y="740.0" width="1.6" height="1.6" fill="rgb(204,204,204)"/>
<circle cx="1309.6" cy="749.1" r="2.4" fill="url(#sh)" opacity="0.5"/>
<rect x="1309.0" y="748.0" width="1.6" height="1.6" fill="rgb(204,204,204)"/>
<circle cx="1288.0" cy="787.4" r="2.7" fill="url(#sh)" opacity="0.5"/>
<rect x="1287.0" y="787.0" width="1.8" height="1.8" fill="rgb(204,204,204)"/>
<circle cx="1354.7" cy="946.6" r="2.4" fill="url(#sh)" opacity="0.5"/>
<rect x="1354.0" y="946.0" width="1.6" height="1.6" fill="rgb(204,204,204)"/>
<circle cx="1892.6" cy="944.3" r="2.4" fill="url(#sh)" opacity="0.5"/>
<rect x="1892.0" y="944.0" width="1.6" height="1.6" fill="rgb(204,204,204)"/>
<circle cx="1792.0" cy="1180.6" r="2.4" fill="url(#sh)" opacity="0.5"/>
<rect x="1791.0" y="1180.0" width="1.6" height="1.6" fill="rgb(204,204,204)"/>
<circle cx="1375.0" cy="1273.5" r="2.4" fill="url(#sh)" opacity="0.5"/>
<rect x="1374.0" y="1273.0" width="1.6" height="1.6" fill="rgb(204,204,204)"/>
<circle cx="1392.1" cy="1275.3" r="2.4" fill="url(#sh)" opacity="0.5"/>
<rect x="1391.0" y="1274.0" width="1.6" height="1.6" fill="rgb(204,204,204)"/>
<circle cx="1927.3" cy="773.0" r="2.4" fill="url(#sh)" opacity="0.5"/>
<rect x="1927.0" y="772.0" width="1.6" height="1.6" fill="rgb(204,204,204)"/>
<circle cx="1484.1" cy="756.7" r="2.4" fill="url(#sh)" opacity="0.5"/>
<rect x="1483.0" y="756.0" width="1.6" height="1.6" fill="rgb(204,204,204)"/>
<circle cx="1704.1" cy="984.4" r="2.4" fill="url(#sh)" opacity="0.5"/>
<rect x="1703.0" y="984.0" width="1.6" height="1.6" fill="rgb(204,204,204)"/>
<circle cx="1756.0" cy="1083.6" r="2.4" fill="url(#sh)" opacity="0.5"/>
<rect x="1755.0" y="1083.0" width="1.6" height="1.6" fill="rgb(204,204,204)"/>
<circle cx="1528.3" cy="637.7" r="2.4" fill="url(#sh)" opacity="0.5"/>
<rect x="1527.0" y="637.0" width="1.6" height="1.6" fill="rgb(204,204,204)"/>
<circle cx="1623.4" cy="682.8" r="2.4" fill="url(#sh)" opacity="0.5"/>
<rect x="1623.0" y="682.0" width="1.6" height="1.6" fill="rgb(204,204,204)"/>
<circle cx="1323.1" cy="867.2" r="2.4" fill="url(#sh)" opacity="0.5"/>
<rect x="1322.0" y="866.0" width="1.6" height="1.6" fill="rgb(204,204,204)"/>
<circle cx="1350.2" cy="796.4" r="2.4" fill="url(#sh)" opacity="0.5"/>
<rect x="1349.0" y="796.0" width="1.6" height="1.6" fill="rgb(204,204,204)"/>
<circle cx="605.0" cy="1420.2" r="5.3" fill="url(#sh)" opacity="0.8"/>
<rect x="603.0" y="1418.0" width="3.7" height="3.7" fill="rgb(255,255,255)"/>
<circle cx="704.2" cy="1454.5" r="7.1" fill="url(#sh)" opacity="0.8"/>
<rect x="702.0" y="1452.0" width="4.9" height="4.9" fill="rgb(255,255,255)"/>
<circle cx="687.5" cy="1455.4" r="2.4" fill="url(#sh)" opacity="0.5"/>
<rect x="687.0" y="1455.0" width="1.6" height="1.6" fill="rgb(204,204,204)"/>
<circle cx="521.6" cy="1478.8" r="5.9" fill="url(#sh)" opacity="0.8"/>
<rect x="520.0" y="1477.0" width="4.1" height="4.1" fill="rgb(255,255,255)"/>
<circle cx="767.3" cy="1421.6" r="3.7" fill="url(#sh)" opacity="0.5"/>
<rect x="766.0" y="1420.0" width="2.4" height="2.4" fill="rgb(255,255,255)"/>
<circle cx="549.5" cy="1526.2" r="2.4" fill="url(#sh)" opacity="0.5"/>
<rect x="549.0" y="1525.0" width="1.6" height="1.6" fill="rgb(204,204,204)"/>
<circle cx="627.5" cy="1526.2" r="3.7" fill="url(#sh)" opacity="0.5"/>
<rect x="626.0" y="1525.0" width="2.4" height="2.4" fill="rgb(255,255,255)"/>
<circle cx="764.1" cy="1541.0" r="2.4" fill="url(#sh)" opacity="0.5"/>
<rect x="763.0" y="1540.0" width="1.6" height="1.6" fill="rgb(204,204,204)"/>
<circle cx="818.2" cy="1575.3" r="2.4" fill="url(#sh)" opacity="0.5"/>
<rect x="817.0" y="1575.0" width="1.6" height="1.6" fill="rgb(204,204,204)"/>
<circle cx="1019.8" cy="1602.8" r="2.4" fill="url(#sh)" opacity="0.5"/>
<rect x="1019.0" y="1602.0" width="1.6" height="1.6" fill="rgb(204,204,204)"/>
<circle cx="659.5" cy="1759.7" r="5.9" fill="url(#sh)" opacity="0.8"/>
<rect x="658.0" y="1758.0" width="4.1" height="4.1" fill="rgb(255,255,255)"/>
<circle cx="593.7" cy="1822.9" r="7.1" fill="url(#sh)" opacity="0.8"/>
<rect x="591.0" y="1820.0" width="4.9" height="4.9" fill="rgb(255,255,255)"/>
<circle cx="1166.3" cy="1648.8" r="8.2" fill="url(#sh)" opacity="0.8"/>
<rect x="1163.0" y="1646.0" width="5.7" height="5.7" fill="rgb(255,255,255)"/>
<circle cx="1135.7" cy="1677.2" r="5.9" fill="url(#sh)" opacity="0.8"/>
<rect x="1134.0" y="1675.0" width="4.1" height="4.1" fill="rgb(255,255,255)"/>
<circle cx="1276.8" cy="1721.4" r="3.7" fill="url(#sh)" opacity="0.5"/>
<rect x="1276.0" y="1720.0" width="2.4" height="2.4" fill="rgb(255,255,255)"/>
<circle cx="1200.1" cy="1763.3" r="2.4" fill="url(#sh)" opacity="0.5"/>
<rect x="1199.0" y="1763.0" width="1.6" height="1.6" fill="rgb(204,204,204)"/>
<circle cx="955.8" cy="1862.5" r="2.4" fill="url(#sh)" opacity="0.5"/>
<rect x="955.0" y="1862.0" width="1.6" height="1.6" fill="rgb(204,204,204)"/>
<circle cx="1053.6" cy="1821.9" r="2.4" fill="url(#sh)" opacity="0.5"/>
<rect x="1053.0" y="1821.0" width="1.6" height="1.6" fill="rgb(204,204,204)"/>
<circle cx="1198.8" cy="2012.2" r="4.7" fill="url(#sh)" opacity="0.8"/>
<rect x="1197.0" y="2011.0" width="3.2" height="3.2" fill="rgb(255,255,255)"/>
<circle cx="1266.4" cy="2011.3" r="3.7" fill="url(#sh)" opacity="0.5"/>
<rect x="1265.0" y="2010.0" width="2.4" height="2.4" fill="rgb(255,255,255)"/>
<circle cx="1273.6" cy="2011.3" r="2.4" fill="url(#sh)" opacity="0.5"/>
<rect x="1273.0" y="2011.0" width="1.6" height="1.6" fill="rgb(204,204,204)"/>
<circle cx="531.5" cy="1969.4" r="2.4" fill="url(#sh)" opacity="0.5"/>
<rect x="531.0" y="1969.0" width="1.6" height="1.6" fill="rgb(204,204,204)"/>
<circle cx="1119.0" cy="2194.8" r="8.2" fill="url(#sh)" opacity="0.8"/>
<rect x="1116.0" y="2192.0" width="5.7" height="5.7" fill="rgb(255,255,255)"/>
<circle cx="807.9" cy="2138.5" r="3.7" fill="url(#sh)" opacity="0.5"/>
<rect x="807.0" y="2137.0" width="2.4" height="2.4" fill="rgb(255,255,255)"/>
<circle cx="920.6" cy="2197.1" r="3.7" fill="url(#sh)" opacity="0.5"/>
<rect x="919.0" y="2196.0" width="2.4" height="2.4" fill="rgb(255,255,255)"/>
<circle cx="942.2" cy="2202.9" r="3.7" fill="url(#sh)" opacity="0.5"/>
<rect x="941.0" y="2202.0" width="2.4" height="2.4" fill="rgb(255,255,255)"/>
<circle cx="637.4" cy="2205.2" r="2.4" fill="url(#sh)" opacity="0.5"/>
<rect x="637.0" y="2204.0" width="1.6" height="1.6" fill="rgb(204,204,204)"/>
<circle cx="723.1" cy="2185.8" r="2.4" fill="url(#sh)" opacity="0.5"/>
<rect x="722.0" y="2185.0" width="1.6" height="1.6" fill="rgb(204,204,204)"/>
<circle cx="787.6" cy="2028.9" r="2.4" fill="url(#sh)" opacity="0.5"/>
<rect x="787.0" y="2028.0" width="1.6" height="1.6" fill="rgb(204,204,204)"/>
<circle cx="633.4" cy="2025.7" r="2.4" fill="url(#sh)" opacity="0.5"/>
<rect x="633.0" y="2025.0" width="1.6" height="1.6" fill="rgb(204,204,204)"/>
<circle cx="617.1" cy="2019.0" r="2.4" fill="url(#sh)" opacity="0.5"/>
<rect x="616.0" y="2018.0" width="1.6" height="1.6" fill="rgb(204,204,204)"/>
<circle cx="517.1" cy="1879.2" r="2.4" fill="url(#sh)" opacity="0.5"/>
<rect x="516.0" y="1878.0" width="1.6" height="1.6" fill="rgb(204,204,204)"/>
<circle cx="586.9" cy="1898.6" r="2.4" fill="url(#sh)" opacity="0.5"/>
<rect x="586.0" y="1898.0" width="1.6" height="1.6" fill="rgb(204,204,204)"/>
<circle cx="963.4" cy="1559.1" r="2.4" fill="url(#sh)" opacity="0.5"/>
<rect x="963.0" y="1558.0" width="1.6" height="1.6" fill="rgb(204,204,204)"/>
<circle cx="1112.2" cy="1562.7" r="2.4" fill="url(#sh)" opacity="0.5"/>
<rect x="1111.0" y="1562.0" width="1.6" height="1.6" fill="rgb(204,204,204)"/>
<circle cx="1106.8" cy="1418.0" r="2.4" fill="url(#sh)" opacity="0.5"/>
<rect x="1106.0" y="1417.0" width="1.6" height="1.6" fill="rgb(204,204,204)"/>
<circle cx="1018.9" cy="2129.5" r="2.4" fill="url(#sh)" opacity="0.5"/>
<rect x="1018.0" y="2129.0" width="1.6" height="1.6" fill="rgb(204,204,204)"/>
<circle cx="1152.8" cy="1909.4" r="2.4" fill="url(#sh)" opacity="0.5"/>
<rect x="1152.0" y="1909.0" width="1.6" height="1.6" fill="rgb(204,204,204)"/>
<circle cx="1167.2" cy="1959.0" r="2.4" fill="url(#sh)" opacity="0.5"/>
<rect x="1166.0" y="1958.0" width="1.6" height="1.6" fill="rgb(204,204,204)"/>
<circle cx="970.2" cy="2037.0" r="2.4" fill="url(#sh)" opacity="0.5"/>
<rect x="969.0" y="2036.0" width="1.6" height="1.6" fill="rgb(204,204,204)"/>
<circle cx="670.4" cy="1435.1" r="2.4" fill="url(#sh)" opacity="0.5"/>
<rect x="670.0" y="1434.0" width="1.6" height="1.6" fill="rgb(204,204,204)"/>
<circle cx="517.1" cy="1455.4" r="2.4" fill="url(#sh)" opacity="0.5"/>
<rect x="516.0" y="1455.0" width="1.6" height="1.6" fill="rgb(204,204,204)"/>
<circle cx="633.4" cy="1568.1" r="2.4" fill="url(#sh)" opacity="0.5"/>
<rect x="633.0" y="1567.0" width="1.6" height="1.6" fill="rgb(204,204,204)"/>
<circle cx="708.7" cy="1599.7" r="2.4" fill="url(#sh)" opacity="0.5"/>
<rect x="708.0" y="1599.0" width="1.6" height="1.6" fill="rgb(204,204,204)"/>
<circle cx="548.6" cy="1773.3" r="2.4" fill="url(#sh)" opacity="0.5"/>
<rect x="548.0" y="1772.0" width="1.6" height="1.6" fill="rgb(204,204,204)"/>
<circle cx="1087.4" cy="1538.8" r="2.4" fill="url(#sh)" opacity="0.5"/>
<rect x="1087.0" y="1538.0" width="1.6" height="1.6" fill="rgb(204,204,204)"/>
<circle cx="1224.9" cy="1453.1" r="2.4" fill="url(#sh)" opacity="0.5"/>
<rect x="1224.0" y="1452.0" width="1.6" height="1.6" fill="rgb(204,204,204)"/>
<circle cx="1134.8" cy="1468.9" r="2.4" fill="url(#sh)" opacity="0.5"/>
<rect x="1134.0" y="1468.0" width="1.6" height="1.6" fill="rgb(204,204,204)"/>
<circle cx="1274.5" cy="1468.9" r="2.4" fill="url(#sh)" opacity="0.5"/>
<rect x="1274.0" y="1468.0" width="1.6" height="1.6" fill="rgb(204,204,204)"/>
<circle cx="1118.1" cy="1768.7" r="2.4" fill="url(#sh)" opacity="0.5"/>
<rect x="1117.0" y="1768.0" width="1.6" height="1.6" fill="rgb(204,204,204)"/>
<circle cx="1188.9" cy="1778.7" r="2.4" fill="url(#sh)" opacity="0.5"/>
<rect x="1188.0" y="1778.0" width="1.6" height="1.6" fill="rgb(204,204,204)"/>
<circle cx="1433.7" cy="1403.4" r="5.9" fill="url(#sh)" opacity="0.8"/>
<rect x="1432.0" y="1401.0" width="4.1" height="4.1" fill="rgb(255,255,255)"/>
<circle cx="1686.2" cy="1627.1" r="5.9" fill="url(#sh)" opacity="0.8"/>
<rect x="1684.0" y="1625.0" width="4.1" height="4.1" fill="rgb(255,255,255)"/>
<circle cx="1739.8" cy="1601.8" r="3.7" fill="url(#sh)" opacity="0.5"/>
<rect x="1739.0" y="1601.0" width="2.4" height="2.4" fill="rgb(255,255,255)"/>
<circle cx="1545.0" cy="1729.4" r="4.7" fill="url(#sh)" opacity="0.8"/>
<rect x="1543.0" y="1728.0" width="3.2" height="3.2" fill="rgb(255,255,255)"/>
<circle cx="2057.2" cy="1730.8" r="5.3" fill="url(#sh)" opacity="0.8"/>
<rect x="2055.0" y="1729.0" width="3.7" height="3.7" fill="rgb(255,255,255)"/>
<circle cx="2035.2" cy="1794.4" r="4.7" fill="url(#sh)" opacity="0.8"/>
<rect x="2034.0" y="1793.0" width="3.2" height="3.2" fill="rgb(255,255,255)"/>
<circle cx="2061.3" cy="1923.3" r="7.1" fill="url(#sh)" opacity="0.8"/>
<rect x="2059.0" y="1921.0" width="4.9" height="4.9" fill="rgb(255,255,255)"/>
<circle cx="1876.4" cy="2142.0" r="4.7" fill="url(#sh)" opacity="0.8"/>
<rect x="1875.0" y="2140.0" width="3.2" height="3.2" fill="rgb(255,255,255)"/>
<circle cx="1975.6" cy="1647.8" r="2.7" fill="url(#sh)" opacity="0.5"/>
<rect x="1975.0" y="1647.0" width="1.8" height="1.8" fill="rgb(204,204,204)"/>
<circle cx="1950.8" cy="1673.1" r="2.4" fill="url(#sh)" opacity="0.5"/>
<rect x="1950.0" y="1672.0" width="1.6" height="1.6" fill="rgb(204,204,204)"/>
<circle cx="1955.3" cy="1678.5" r="2.4" fill="url(#sh)" opacity="0.5"/>
<rect x="1955.0" y="1678.0" width="1.6" height="1.6" fill="rgb(204,204,204)"/>
<circle cx="1580.2" cy="1481.9" r="3.0" fill="url(#sh)" opacity="0.5"/>
<rect x="1579.0" y="1481.0" width="2.0" height="2.0" fill="rgb(255,255,255)"/>
<circle cx="1571.2" cy="1475.6" r="2.4" fill="url(#sh)" opacity="0.5"/>
<rect x="1570.0" y="1475.0" width="1.6" height="1.6" fill="rgb(204,204,204)"/>
<circle cx="1599.1" cy="1482.8" r="2.4" fill="url(#sh)" opacity="0.5"/>
<rect x="1598.0" y="1482.0" width="1.6" height="1.6" fill="rgb(204,204,204)"/>
<circle cx="1468.4" cy="1483.7" r="2.4" fill="url(#sh)" opacity="0.5"/>
<rect x="1468.0" y="1483.0" width="1.6" height="1.6" fill="rgb(204,204,204)"/>
<circle cx="1459.4" cy="1534.2" r="2.4" fill="url(#sh)" opacity="0.5"/>
<rect x="1459.0" y="1533.0" width="1.6" height="1.6" fill="rgb(204,204,204)"/>
<circle cx="1311.5" cy="1594.6" r="2.4" fill="url(#sh)" opacity="0.5"/>
<rect x="1311.0" y="1594.0" width="1.6" height="1.6" fill="rgb(204,204,204)"/>
<circle cx="1837.2" cy="1724.9" r="2.4" fill="url(#sh)" opacity="0.5"/>
<rect x="1836.0" y="1724.0" width="1.6" height="1.6" fill="rgb(204,204,204)"/>
<circle cx="1681.2" cy="1681.2" r="2.4" fill="url(#sh)" opacity="0.5"/>
<rect x="1680.0" y="1680.0" width="1.6" height="1.6" fill="rgb(204,204,204)"/>
<circle cx="1441.3" cy="1905.3" r="2.4" fill="url(#sh)" opacity="0.5"/>
<rect x="1441.0" y="1904.0" width="1.6" height="1.6" fill="rgb(204,204,204)"/>
<circle cx="1490.9" cy="1972.9" r="2.4" fill="url(#sh)" opacity="0.5"/>
<rect x="1490.0" y="1972.0" width="1.6" height="1.6" fill="rgb(204,204,204)"/>
<circle cx="1382.7" cy="1840.8" r="2.4" fill="url(#sh)" opacity="0.5"/>
<rect x="1382.0" y="1840.0" width="1.6" height="1.6" fill="rgb(204,204,204)"/>
<circle cx="2029.7" cy="1991.0" r="2.4" fill="url(#sh)" opacity="0.5"/>
<rect x="2029.0" y="1990.0" width="1.6" height="1.6" fill="rgb(204,204,204)"/>
<circle cx="2017.6" cy="2074.4" r="2.4" fill="url(#sh)" opacity="0.5"/>
<rect x="2017.0" y="2074.0" width="1.6" height="1.6" fill="rgb(204,204,204)"/>
<circle cx="2038.8" cy="1903.0" r="2.4" fill="url(#sh)" opacity="0.5"/>
<rect x="2038.0" y="1902.0" width="1.6" height="1.6" fill="rgb(204,204,204)"/>
<circle cx="2056.8" cy="2154.6" r="2.4" fill="url(#sh)" opacity="0.5"/>
<rect x="2056.0" y="2154.0" width="1.6" height="1.6" fill="rgb(204,204,204)"/>
<circle cx="1273.6" cy="2011.2" r="2.4" fill="url(#sh)" opacity="0.5"/>
<rect x="1273.0" y="2010.0" width="1.6" height="1.6" fill="rgb(204,204,204)"/>
<circle cx="1513.5" cy="1467.9" r="2.4" fill="url(#sh)" opacity="0.5"/>
<rect x="1513.0" y="1467.0" width="1.6" height="1.6" fill="rgb(204,204,204)"/>
<circle cx="1371.4" cy="1544.6" r="2.4" fill="url(#sh)" opacity="0.5"/>
<rect x="1371.0" y="1544.0" width="1.6" height="1.6" fill="rgb(204,204,204)"/>
<circle cx="1427.8" cy="1499.5" r="2.4" fill="url(#sh)" opacity="0.5"/>
<rect x="1427.0" y="1499.0" width="1.6" height="1.6" fill="rgb(204,204,204)"/>
<circle cx="1808.8" cy="2081.1" r="2.4" fill="url(#sh)" opacity="0.5"/>
<rect x="1808.0" y="2080.0" width="1.6" height="1.6" fill="rgb(204,204,204)"/>
<circle cx="2135.7" cy="2133.0" r="2.4" fill="url(#sh)" opacity="0.5"/>
<rect x="2135.0" y="2132.0" width="1.6" height="1.6" fill="rgb(204,204,204)"/>
<circle cx="1187.9" cy="1073.1" r="3.7" fill="url(#sh)" opacity="0.5"/>
<rect x="1187.0" y="1072.0" width="2.4" height="2.4" fill="rgb(255,255,255)"/>
<circle cx="1084.9" cy="1048.8" r="2.4" fill="url(#sh)" opacity="0.5"/>
<rect x="1084.0" y="1048.0" width="1.6" height="1.6" fill="rgb(255,255,255)"/>
<circle cx="1042.7" cy="1090.7" r="2.4" fill="url(#sh)" opacity="0.5"/>
<rect x="1042.0" y="1090.0" width="1.6" height="1.6" fill="rgb(255,255,255)"/>
<circle cx="1046.8" cy="1095.0" r="2.4" fill="url(#sh)" opacity="0.5"/>
<rect x="1046.0" y="1094.0" width="1.6" height="1.6" fill="rgb(255,255,255)"/>
<circle cx="1032.8" cy="1140.8" r="2.4" fill="url(#sh)" opacity="0.5"/>
<rect x="1032.0" y="1140.0" width="1.6" height="1.6" fill="rgb(255,255,255)"/>
<circle cx="1150.9" cy="1114.8" r="2.4" fill="url(#sh)" opacity="0.5"/>
<rect x="1150.0" y="1114.0" width="1.6" height="1.6" fill="rgb(255,255,255)"/>
<circle cx="1177.7" cy="1136.9" r="2.4" fill="url(#sh)" opacity="0.5"/>
<rect x="1177.0" y="1136.0" width="1.6" height="1.6" fill="rgb(255,255,255)"/>
<circle cx="1219.7" cy="1122.7" r="2.4" fill="url(#sh)" opacity="0.5"/>
<rect x="1219.0" y="1122.0" width="1.6" height="1.6" fill="rgb(255,255,255)"/>
<circle cx="992.9" cy="1335.1" r="2.4" fill="url(#sh)" opacity="0.5"/>
<rect x="992.0" y="1334.0" width="1.6" height="1.6" fill="rgb(255,255,255)"/>
<circle cx="1145.1" cy="1300.8" r="2.4" fill="url(#sh)" opacity="0.5"/>
<rect x="1144.0" y="1300.0" width="1.6" height="1.6" fill="rgb(255,255,255)"/>
<circle cx="1264.8" cy="1392.8" r="2.4" fill="url(#sh)" opacity="0.5"/>
<rect x="1264.0" y="1392.0" width="1.6" height="1.6" fill="rgb(255,255,255)"/>
<circle cx="1107.0" cy="1106.9" r="2.4" fill="url(#sh)" opacity="0.5"/>
<rect x="1106.0" y="1106.0" width="1.6" height="1.6" fill="rgb(191,191,191)"/>
<circle cx="1137.8" cy="1058.5" r="2.4" fill="url(#sh)" opacity="0.5"/>
<rect x="1137.0" y="1058.0" width="1.6" height="1.6" fill="rgb(191,191,191)"/>
<circle cx="942.8" cy="1070.9" r="2.4" fill="url(#sh)" opacity="0.5"/>
<rect x="942.0" y="1070.0" width="1.6" height="1.6" fill="rgb(191,191,191)"/>
<circle cx="996.9" cy="1068.2" r="2.4" fill="url(#sh)" opacity="0.5"/>
<rect x="996.0" y="1067.0" width="1.6" height="1.6" fill="rgb(191,191,191)"/>
<circle cx="940.6" cy="1110.8" r="2.4" fill="url(#sh)" opacity="0.5"/>
<rect x="940.0" y="1110.0" width="1.6" height="1.6" fill="rgb(191,191,191)"/>
<circle cx="1238.8" cy="1084.8" r="2.4" fill="url(#sh)" opacity="0.5"/>
<rect x="1238.0" y="1084.0" width="1.6" height="1.6" fill="rgb(191,191,191)"/>
<circle cx="1252.4" cy="1175.0" r="2.4" fill="url(#sh)" opacity="0.5"/>
<rect x="1252.0" y="1174.0" width="1.6" height="1.6" fill="rgb(191,191,191)"/>
<circle cx="1126.6" cy="1329.0" r="2.4" fill="url(#sh)" opacity="0.5"/>
<rect x="1126.0" y="1328.0" width="1.6" height="1.6" fill="rgb(191,191,191)"/>
<circle cx="1004.8" cy="1311.4" r="2.4" fill="url(#sh)" opacity="0.5"/>
<rect x="1004.0" y="1311.0" width="1.6" height="1.6" fill="rgb(191,191,191)"/>
<circle cx="1437.7" cy="1712.8" r="50" fill="url(#bh)"/>
<line x1="1285.7" y1="1560.7" x2="1589.8" y2="1864.8" stroke="url(#sp)" stroke-width="2.2" opacity="0.95"/>
<line x1="1285.7" y1="1864.8" x2="1589.8" y2="1560.7" stroke="url(#sp)" stroke-width="2.2" opacity="0.95"/>
<line x1="1352.7" y1="1711.5" x2="1567.7" y2="1712.1" stroke="url(#sp)" stroke-width="2" opacity="0.95"/>
<line x1="1381.2" y1="1656.2" x2="1494.3" y2="1769.3" stroke="url(#sp)" stroke-width="4.5" opacity="0.90"/>
<line x1="1381.2" y1="1769.3" x2="1494.3" y2="1656.2" stroke="url(#sp)" stroke-width="4.5" opacity="0.90"/>
</g></g>
<g clip-path="url(#chips)">
<g filter="url(#b1_2)">
<circle cx="1437.7" cy="1712.8" r="32" fill="#fff"/>
</g></g>
<g clip-path="url(#chips)">
<g filter="url(#b0_8)">
<circle cx="1362.4" cy="1685.2" r="4.2" fill="none" stroke="rgb(230,230,230)" stroke-width="2"/>
</g></g>
<g clip-path="url(#chips)">
<g>
<circle cx="530.5" cy="2131.0" r="40" fill="url(#bh)"/>
<line x1="424.4" y1="2024.9" x2="636.6" y2="2237.1" stroke="url(#sp)" stroke-width="2.0" opacity="0.80"/>
<line x1="424.4" y1="2237.1" x2="636.6" y2="2024.9" stroke="url(#sp)" stroke-width="2.0" opacity="0.80"/>
</g></g>
<g clip-path="url(#chips)">
<g filter="url(#b1_5)">
<rect x="515.5" y="2114.0" width="30" height="34" rx="6" fill="#fff"/>
</g></g>
<g clip-path="url(#chips)">
<g>
<circle cx="1270.0" cy="1739.4" r="18" fill="url(#bh)"/>
<line x1="1234.7" y1="1704.1" x2="1305.4" y2="1774.8" stroke="url(#sp)" stroke-width="1.6" opacity="0.80"/>
<line x1="1234.7" y1="1774.8" x2="1305.4" y2="1704.1" stroke="url(#sp)" stroke-width="1.6" opacity="0.80"/>
</g></g>
<g clip-path="url(#chips)">
<g filter="url(#b0_8)">
<rect x="1264.5" y="1733.9" width="11" height="11" fill="#fff"/>
</g></g>
<g clip-path="url(#chips)">
<g>
<line x1="1147.9" y1="1630.4" x2="1184.7" y2="1667.2" stroke="url(#sp)" stroke-width="1.3" opacity="0.55"/>
<line x1="1147.9" y1="1667.2" x2="1184.7" y2="1630.4" stroke="url(#sp)" stroke-width="1.3" opacity="0.55"/>
<line x1="690.0" y1="1440.3" x2="718.3" y2="1468.6" stroke="url(#sp)" stroke-width="1.3" opacity="0.55"/>
<line x1="690.0" y1="1468.6" x2="718.3" y2="1440.3" stroke="url(#sp)" stroke-width="1.3" opacity="0.55"/>
<line x1="1100.6" y1="2176.4" x2="1137.4" y2="2213.2" stroke="url(#sp)" stroke-width="1.3" opacity="0.55"/>
<line x1="1100.6" y1="2213.2" x2="1137.4" y2="2176.4" stroke="url(#sp)" stroke-width="1.3" opacity="0.55"/>
<line x1="1379.5" y1="765.7" x2="1421.9" y2="808.2" stroke="url(#sp)" stroke-width="1.3" opacity="0.55"/>
<line x1="1379.5" y1="808.2" x2="1421.9" y2="765.7" stroke="url(#sp)" stroke-width="1.3" opacity="0.55"/>
<line x1="582.4" y1="1811.5" x2="605.0" y2="1834.2" stroke="url(#sp)" stroke-width="1.3" opacity="0.55"/>
<line x1="582.4" y1="1834.2" x2="605.0" y2="1811.5" stroke="url(#sp)" stroke-width="1.3" opacity="0.55"/>
</g></g>
<g clip-path="url(#chips)">
<g filter="url(#b0_7)">
<path d="M1288.5 1397.0 L1296.0 2205.0" fill="none" stroke="rgb(0,0,0)" stroke-width="1.6" stroke-linecap="round" stroke-linejoin="round" stroke-opacity="0.22"/>
</g></g>
<g clip-path="url(#chips)">
<g filter="url(#b0_8)">
<path d="M1288.0 1396.5 L2077.0 1390.5" fill="none" stroke="rgb(0,0,0)" stroke-width="2.2" stroke-linecap="round" stroke-linejoin="round" stroke-opacity="0.32"/>
</g></g>
<g clip-path="url(#chips)">
<g>
<path d="M1285.0 1034.0 L1285.0 1398.0" fill="none" stroke="rgb(0,0,0)" stroke-width="2.0" stroke-linecap="round" stroke-linejoin="round" stroke-opacity="0.55"/>
<path d="M926.0 1398.0 L1286.0 1398.0" fill="none" stroke="rgb(0,0,0)" stroke-width="1.6" stroke-linecap="round" stroke-linejoin="round" stroke-opacity="0.50"/>
</g></g>
</g></g>
</svg>
<svg style="position:absolute;left:1902px;top:72px" width="254" height="254" viewBox="490 538 1682 1682">
<defs><filter id="cm2" x="490" y="538" width="1682" height="1682" filterUnits="userSpaceOnUse" color-interpolation-filters="sRGB">
 <feTurbulence type="fractalNoise" baseFrequency="0.05" numOctaves="2" seed="5" result="n"/>
 <feColorMatrix in="n" type="matrix" values="1 0 0 0 0  1 0 0 0 0  1 0 0 0 0  0 0 0 0 1" result="ng"/>
 <feComposite in="SourceGraphic" in2="ng" operator="arithmetic" k1="0.3" k2="0.85" k3="0.07" k4="-0.035" result="s"/>
 <feComponentTransfer in="s" result="c">
  <feFuncR type="table" tableValues="0.0000 0.0408 0.0817 0.1225 0.1634 0.2042 0.2446 0.2851 0.3256 0.3660 0.4074 0.4535 0.4997 0.5458 0.5919 0.6385 0.6911 0.7437 0.7963 0.8489 0.8993 0.9261 0.9282 0.9303 0.9323 0.9341 0.9357 0.9373 0.9388 0.9404 0.9419 0.9435 0.9450 0.9465 0.9481 0.9496 0.9511 0.9526 0.9540 0.9555 0.9571 0.9593 0.9616 0.9638 0.9661 0.9684 0.9707 0.9730 0.9753 0.9776 0.9799 0.9816 0.9832 0.9848 0.9863 0.9879 0.9892 0.9905 0.9918 0.9953 1.0000"/>
  <feFuncG type="table" tableValues="0.0000 0.0180 0.0359 0.0539 0.0719 0.0894 0.1049 0.1205 0.1361 0.1516 0.1672 0.1825 0.1979 0.2133 0.2287 0.2443 0.2634 0.2825 0.3017 0.3208 0.3392 0.3537 0.3692 0.3848 0.4004 0.4159 0.4315 0.4471 0.4626 0.4782 0.4944 0.5113 0.5282 0.5451 0.5621 0.5782 0.5930 0.6079 0.6228 0.6376 0.6528 0.6708 0.6888 0.7069 0.7249 0.7429 0.7613 0.7798 0.7982 0.8167 0.8352 0.8527 0.8701 0.8874 0.9047 0.9220 0.9396 0.9572 0.9748 0.9883 1.0000"/>
  <feFuncB type="table" tableValues="0.0000 0.0049 0.0098 0.0147 0.0196 0.0246 0.0301 0.0355 0.0410 0.0464 0.0518 0.0572 0.0626 0.0680 0.0734 0.0789 0.0860 0.0932 0.1004 0.1076 0.1144 0.1183 0.1203 0.1224 0.1245 0.1263 0.1279 0.1294 0.1310 0.1325 0.1348 0.1379 0.1410 0.1440 0.1471 0.1507 0.1552 0.1596 0.1641 0.1685 0.1760 0.2106 0.2451 0.2797 0.3142 0.3488 0.3935 0.4397 0.4858 0.5319 0.5781 0.6282 0.6793 0.7305 0.7817 0.8329 0.8803 0.9268 0.9734 0.9930 1.0000"/>
 </feComponentTransfer>
 <feComposite in="c" in2="SourceAlpha" operator="in"/>
</filter></defs>
<g filter="url(#cm2)"><use href="#nebc"/></g></svg>
<svg style="position:absolute;left:1902px;top:72px" width="254" height="254" viewBox="2014 148 254 254" font-family="'Liberation Sans',sans-serif" font-size="24" text-anchor="middle">
<g stroke="#3fe0ea" fill="#3fe0ea" stroke-width="2">
<line x1="2141.2" y1="276" x2="2141.2" y2="222"/><path d="M2141.2 213.5 L2136.2 228 L2141.2 223.5 L2146.2 228Z" stroke-width="1"/>
<line x1="2140.2" y1="275.1" x2="2194" y2="275.1"/><path d="M2202 275.1 L2187.5 270.1 L2192 275.1 L2187.5 280.1Z" stroke-width="1"/>
</g>
<g fill="#3fe0ea"><text x="2140" y="205.4">Y</text><text x="2218.3" y="285.6">X</text></g>
<g stroke="#e6e128" fill="#e6e128" stroke-width="2">
<line x1="2141.2" y1="275.1" x2="2116" y2="298.2"/><path d="M2110 303.7 L2117.3 290.2 L2117.6 296.8 L2124.1 297.6Z" stroke-width="1"/>
<line x1="2141.2" y1="275.1" x2="2164" y2="299.7"/><path d="M2170 306 L2156.2 300 L2162.7 299 L2163.4 292.5Z" stroke-width="1"/>
</g>
<g fill="#e6e128"><text x="2093" y="327.4">N</text><text x="2181.2" y="329.4">E</text></g>
</svg>
<svg style="position:absolute;left:0;top:2154px" width="2438" height="36"><defs><linearGradient id="cbg" x1="0" x2="1" y1="0" y2="0"><stop offset="0.000" stop-color="rgb(0,0,0)"/><stop offset="0.080" stop-color="rgb(50,22,6)"/><stop offset="0.164" stop-color="rgb(102,42,13)"/><stop offset="0.249" stop-color="rgb(162,62,20)"/><stop offset="0.331" stop-color="rgb(228,86,29)"/><stop offset="0.345" stop-color="rgb(236,89,30)"/><stop offset="0.408" stop-color="rgb(238,104,32)"/><stop offset="0.492" stop-color="rgb(240,124,34)"/><stop offset="0.577" stop-color="rgb(242,146,38)"/><stop offset="0.665" stop-color="rgb(244,166,44)"/><stop offset="0.752" stop-color="rgb(247,190,90)"/><stop offset="0.837" stop-color="rgb(250,214,150)"/><stop offset="0.920" stop-color="rgb(252,236,215)"/><stop offset="0.972" stop-color="rgb(253,250,252)"/><stop offset="1.000" stop-color="rgb(255,255,255)"/></linearGradient></defs><rect x="2" y="0" width="2434" height="36" fill="url(#cbg)"/></svg>
<div id="cbar"></div>
<div class="tick" style="left:242.0px"></div><div class="tl" style="left:179.0px">4.4</div><div class="tick" style="left:486.2px"></div><div class="tl" style="left:423.2px">8.8</div><div class="tick" style="left:730.4px"></div><div class="tl" style="left:667.4px">13</div><div class="tick" style="left:974.0px"></div><div class="tl" style="left:911.0px">18</div><div class="tick" style="left:1218.0px"></div><div class="tl" style="left:1155.0px">22</div><div class="tick" style="left:1462.3px"></div><div class="tl" style="left:1399.3px">27</div><div class="tick" style="left:1706.2px"></div><div class="tl" style="left:1643.2px">31</div><div class="tick" style="left:1950.0px"></div><div class="tl" style="left:1887.0px">35</div><div class="tick" style="left:2194.2px"></div><div class="tl" style="left:2131.2px">40</div>
</div></div>
</body></html>
